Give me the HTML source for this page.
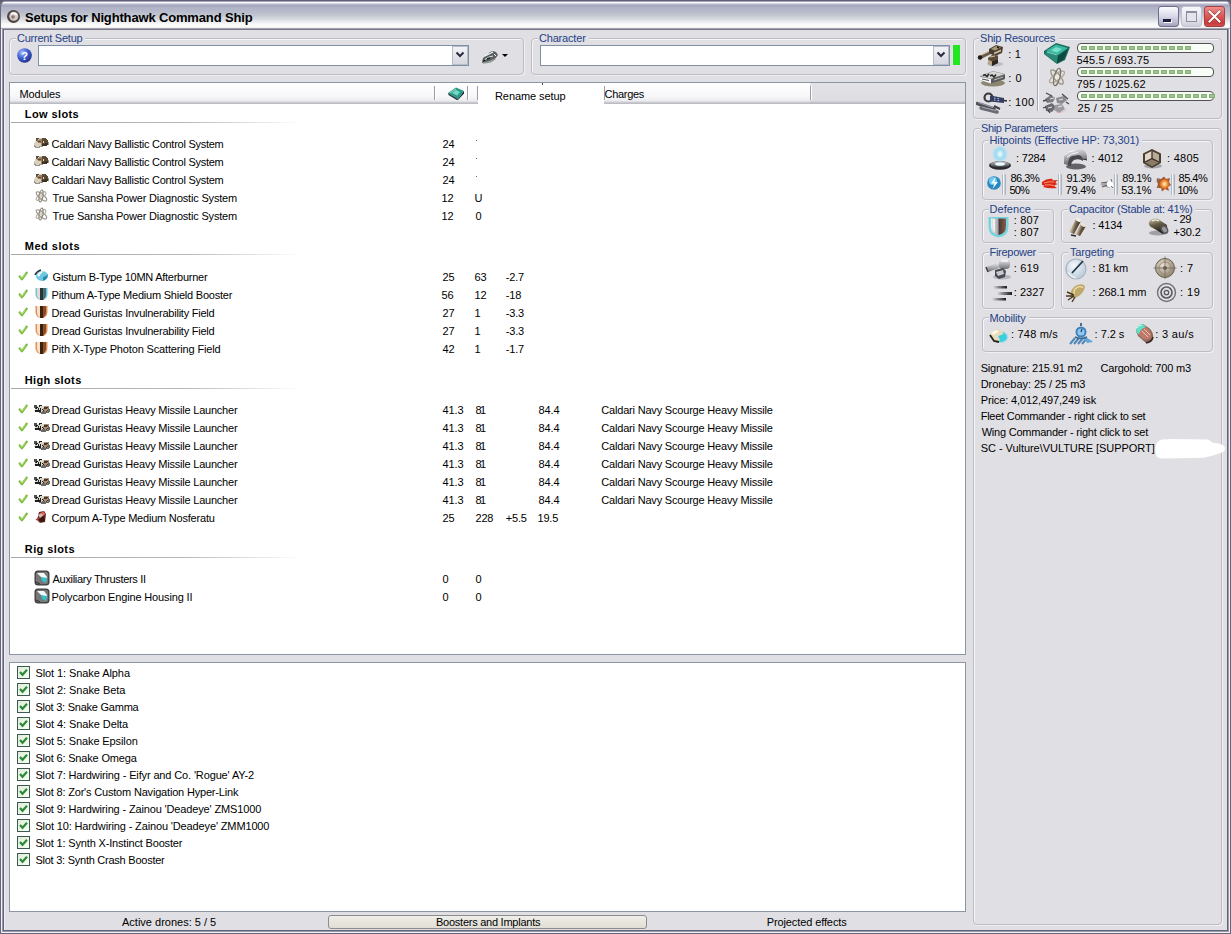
<!DOCTYPE html><html><head><meta charset="utf-8"><style>
html,body{margin:0;padding:0;}
body{width:1231px;height:934px;position:relative;overflow:hidden;background:#e0dfe3;font-family:"Liberation Sans",sans-serif;}
.t{position:absolute;white-space:pre;font-family:"Liberation Sans",sans-serif;font-size:11px;line-height:13px;color:#000;}
.gt{color:#1f3f86;letter-spacing:-0.2px;}
</style></head><body>
<div style="position:absolute;left:0px;top:0px;width:1231px;height:12px;background:#5e5e70;"></div>
<div style="position:absolute;left:0;top:0;width:1231px;height:30px;border-radius:7px 7px 0 0;background:linear-gradient(to bottom,#60607a 0px,#60607a 1px,#a4a4b4 1px,#a4a4b4 2px,#fafafc 2px,#fafafc 3px,#d4d4e2 3px,#d4d4e2 4px,#b8b8cc 4px,#b8b8cc 5px,#a6a6be 5px,#a6a6be 6px,#a8a8c0 6px,#a8a8c0 7px,#b0b2c6 7px,#b0b2c6 8px,#b2b4c8 8px,#b2b4c8 9px,#b3b6c9 9px,#b3b6c9 10px,#b5b8ca 10px,#b5b8ca 11px,#b7bbcb 11px,#b7bbcb 12px,#b9bdcb 12px,#b9bdcb 13px,#bcc1cc 13px,#bcc1cc 14px,#bfc4ce 14px,#bfc4ce 15px,#c3c7d1 15px,#c3c7d1 16px,#c8ccd4 16px,#c8ccd4 17px,#cdd1d8 17px,#cdd1d8 18px,#d3d6dc 18px,#d3d6dc 19px,#d9dbe0 19px,#d9dbe0 20px,#e2e4e8 20px,#e2e4e8 21px,#e8e9ec 21px,#e8e9ec 22px,#eeeff1 22px,#eeeff1 23px,#f5f5f7 23px,#f5f5f7 24px,#f9f9fa 24px,#f9f9fa 25px,#fbfbfc 25px,#fbfbfc 26px,#fafafb 26px,#fafafb 27px,#f0f0f3 27px,#f0f0f3 28px,#a4a4b0 28px,#a4a4b0 29px,#767684 29px,#767684 30px);box-shadow:inset 1px 0 0 #6a6a7a, inset -1px 0 0 #6a6a7a;"></div>
<div style="position:absolute;left:0px;top:29px;width:1px;height:905px;background:#66667a;"></div>
<div style="position:absolute;left:1px;top:29px;width:1px;height:904px;background:#f2f2f6;"></div>
<div style="position:absolute;left:2px;top:29px;width:1px;height:903px;background:#9a9aaa;"></div>
<div style="position:absolute;left:3px;top:29px;width:1px;height:902px;background:#62627a;"></div>
<div style="position:absolute;left:1230px;top:29px;width:1px;height:905px;background:#66667a;"></div>
<div style="position:absolute;left:1229px;top:29px;width:1px;height:904px;background:#f2f2f6;"></div>
<div style="position:absolute;left:1228px;top:29px;width:1px;height:903px;background:#9a9aaa;"></div>
<div style="position:absolute;left:1227px;top:29px;width:1px;height:902px;background:#62627a;"></div>
<div style="position:absolute;left:3px;top:930px;width:1225px;height:1px;background:#62627a;"></div>
<div style="position:absolute;left:2px;top:931px;width:1227px;height:1px;background:#9a9aaa;"></div>
<div style="position:absolute;left:1px;top:932px;width:1229px;height:1px;background:#f2f2f6;"></div>
<div style="position:absolute;left:0px;top:933px;width:1231px;height:1px;background:#66667a;"></div>
<div style="position:absolute;left:4px;top:30px;width:1px;height:900px;background:#f0f0f4;"></div>
<svg style="position:absolute;left:6px;top:9px" width="16" height="15" viewBox="0 0 16 15"><defs><filter id="b1" x="-20%" y="-20%" width="140%" height="140%"><feGaussianBlur stdDeviation="0.35"/></filter></defs><g filter="url(#b1)"><circle cx="7.5" cy="7.5" r="6.5" fill="#4e4440"/><circle cx="7.8" cy="7.2" r="4.5" fill="#d8ccc8"/><path d="M5 5 Q8 3 11 6" stroke="#ffffff" stroke-width="1.5" fill="none"/><circle cx="7" cy="8" r="1.8" fill="#8a7a74"/></g></svg>
<div class="t" style="left:25px;top:10px;font-size:13px;line-height:15px;font-weight:bold;color:#000;letter-spacing:-0.156px;">Setups for Nighthawk Command Ship</div>
<div style="position:absolute;left:1158px;top:6px;width:21px;height:21px;border:1px solid #6e6e88;border-radius:3px;box-sizing:border-box;background:linear-gradient(to bottom,#fbfbff,#dcdcea 45%,#b4b4cc 85%,#a0a0bc);"></div>
<div style="position:absolute;left:1163px;top:19px;width:8px;height:3px;background:#1c1c3c;box-shadow:1px 1px 0 #fff;"></div>
<div style="position:absolute;left:1181px;top:6px;width:21px;height:21px;border:1px solid #c4c4d0;border-radius:3px;box-sizing:border-box;background:linear-gradient(to bottom,#f6f6fa,#e4e4ec 60%,#cfcfdc);"></div>
<div style="position:absolute;left:1186px;top:11px;width:11px;height:11px;border:1px solid #8e8e9c;border-top-width:2px;box-sizing:border-box;background:#e4e4ec;"></div>
<div style="position:absolute;left:1204px;top:6px;width:21px;height:21px;border:1px solid #a84040;border-radius:3px;box-sizing:border-box;background:linear-gradient(to bottom,#f09090,#dc5a58 45%,#c83c3c 85%,#d05050);"></div>
<svg style="position:absolute;left:1207px;top:9px" width="15" height="15" viewBox="0 0 15 15"><path d="M2.5 2.5 L12.5 12.5 M12.5 2.5 L2.5 12.5" stroke="#5a1a1a" stroke-width="3.2" stroke-linecap="square" opacity="0.5"/><path d="M2.5 2.5 L12.5 12.5 M12.5 2.5 L2.5 12.5" stroke="#ffffff" stroke-width="2" stroke-linecap="square"/></svg>
<div style="position:absolute;left:9px;top:38px;width:515px;height:37px;border:1px solid #bdbcc5;border-radius:4px;box-sizing:border-box;box-shadow:inset 1px 1px 0 #f6f6f8, 1px 1px 0 #f0f0f4;"></div>
<div style="position:absolute;left:16px;top:33px;width:69.2px;height:11px;background:#e0dfe3;"></div>
<div class="t" style="left:17px;top:32px;font-size:11px;line-height:13px;color:#1f3f86;letter-spacing:-0.233px;">Current Setup</div>
<svg style="position:absolute;left:17px;top:48px" width="16" height="16" viewBox="0 0 16 16"><defs><radialGradient id="qg" cx="0.35" cy="0.3" r="0.8"><stop offset="0" stop-color="#a8c0ff"/><stop offset="0.5" stop-color="#3c5cd0"/><stop offset="1" stop-color="#1c2c80"/></radialGradient></defs><circle cx="7.5" cy="7.5" r="7.3" fill="url(#qg)"/><text x="7.5" y="12" font-family="Liberation Sans" font-weight="bold" font-size="11" fill="#fff" text-anchor="middle">?</text></svg>
<div style="position:absolute;left:38px;top:45px;width:431px;height:21px;border:1px solid #7f8fa6;box-sizing:border-box;background:#fff;"></div>
<div style="position:absolute;left:452px;top:46px;width:16px;height:19px;border:1px solid #b8bcc8;box-sizing:border-box;background:linear-gradient(to bottom,#f2f2f6,#d6d6e0);"></div>
<svg style="position:absolute;left:455px;top:51px" width="10" height="8" viewBox="0 0 10 8"><path d="M1.5 1.5 L5 5 L8.5 1.5" stroke="#2a2a40" stroke-width="2" fill="none"/></svg>
<svg style="position:absolute;left:481px;top:49px" width="18" height="16" viewBox="0 0 18 16"><defs><filter id="b2" x="-20%" y="-20%" width="140%" height="140%"><feGaussianBlur stdDeviation="0.4"/></filter></defs><g filter="url(#b2)"><path d="M1 14 L2 9 L6 6 L9 3 L12 2 L15 3 L17 6 L14 10 L9 12 L4 14 Z" fill="#5a6060"/><path d="M4 7 L8 5 L12 3" stroke="#f0f4f4" stroke-width="1.3" fill="none"/><path d="M3 11 L8 8 L12 7" stroke="#e0e4e4" stroke-width="1" fill="none"/><path d="M2 12 L4 11 M6 10 L9 9" stroke="#1a2020" stroke-width="1.5"/><path d="M13 5 L15 7" stroke="#ffffff" stroke-width="1"/><path d="M2 14 L9 13 L14 10" stroke="#909898" stroke-width="1.5" fill="none"/></g></svg>
<svg style="position:absolute;left:502px;top:54px" width="6" height="4" viewBox="0 0 6 4"><path d="M0 0 L6 0 L3 3 Z" fill="#000"/></svg>
<div style="position:absolute;left:531px;top:38px;width:435px;height:37px;border:1px solid #bdbcc5;border-radius:4px;box-sizing:border-box;box-shadow:inset 1px 1px 0 #f6f6f8, 1px 1px 0 #f0f0f4;"></div>
<div style="position:absolute;left:538px;top:33px;width:50.5px;height:11px;background:#e0dfe3;"></div>
<div class="t" style="left:539px;top:32px;font-size:11px;line-height:13px;color:#1f3f86;letter-spacing:-0.188px;">Character</div>
<div style="position:absolute;left:540px;top:45px;width:410px;height:21px;border:1px solid #7f8fa6;box-sizing:border-box;background:#fff;"></div>
<div style="position:absolute;left:933px;top:46px;width:16px;height:19px;border:1px solid #b8bcc8;box-sizing:border-box;background:linear-gradient(to bottom,#f2f2f6,#d6d6e0);"></div>
<svg style="position:absolute;left:936px;top:51px" width="10" height="8" viewBox="0 0 10 8"><path d="M1.5 1.5 L5 5 L8.5 1.5" stroke="#2a2a40" stroke-width="2" fill="none"/></svg>
<div style="position:absolute;left:953px;top:45px;width:7px;height:20px;background:#22e622;"></div>
<div style="position:absolute;left:9px;top:82px;width:957px;height:573px;border:1px solid #8a96a4;box-sizing:border-box;background:#fff;"></div>
<div style="position:absolute;left:10px;top:83px;width:955px;height:21px;background:linear-gradient(to bottom,#ffffff,#f8f8fa 60%,#ececf0 85%,#d4d4da 90%,#b4b4bc);"></div>
<div style="position:absolute;left:810px;top:83px;width:155px;height:21px;background:linear-gradient(to bottom,#e2e1e5,#dedde2 85%,#cacad0 90%,#b4b4bc);"></div>
<div style="position:absolute;left:434px;top:86px;width:1px;height:14px;background:#9c9ca4;"></div>
<div style="position:absolute;left:435px;top:86px;width:1px;height:14px;background:#ffffff;"></div>
<div style="position:absolute;left:467px;top:86px;width:1px;height:14px;background:#9c9ca4;"></div>
<div style="position:absolute;left:468px;top:86px;width:1px;height:14px;background:#ffffff;"></div>
<div style="position:absolute;left:477px;top:86px;width:1px;height:14px;background:#9c9ca4;"></div>
<div style="position:absolute;left:478px;top:86px;width:1px;height:14px;background:#ffffff;"></div>
<div style="position:absolute;left:604px;top:86px;width:1px;height:14px;background:#9c9ca4;"></div>
<div style="position:absolute;left:605px;top:86px;width:1px;height:14px;background:#ffffff;"></div>
<div style="position:absolute;left:810px;top:86px;width:1px;height:14px;background:#9c9ca4;"></div>
<div style="position:absolute;left:811px;top:86px;width:1px;height:14px;background:#ffffff;"></div>
<div class="t" style="left:19.5px;top:88px;font-size:11px;line-height:13px;color:#000;letter-spacing:-0.083px;">Modules</div>
<svg style="position:absolute;left:447px;top:86px" width="18" height="14" viewBox="0 0 18 14"><defs><filter id="b3" x="-20%" y="-20%" width="140%" height="140%"><feGaussianBlur stdDeviation="0.35"/></filter></defs><g filter="url(#b3)"><path d="M1 7 L9 1.5 L17 5 L11 13 Z" fill="#2a9a86"/><path d="M5 7 L9 4 L13 6 L10 9.5 Z" fill="#70d8c4"/><path d="M1 7 L11 13 L10.5 14.5 L1.5 9 Z" fill="#1e3a40"/><path d="M11 13 L17 5 L17 7.5 L10.5 14.5 Z" fill="#142a30"/><path d="M3 7 L9 3" stroke="#a0f0e0" stroke-width="0.8"/></g></svg>
<div style="position:absolute;left:478px;top:83px;width:126px;height:22px;background:#fff;"></div>
<div style="position:absolute;left:542px;top:83px;width:1px;height:2px;background:#444;"></div>
<div class="t" style="left:495px;top:90px;font-size:11px;line-height:13px;color:#000;letter-spacing:-0.091px;">Rename setup</div>
<div class="t" style="left:604.5px;top:88px;font-size:11px;line-height:13px;color:#000;letter-spacing:-0.300px;">Charges</div>
<div class="t" style="left:24.8px;top:108px;font-size:11px;line-height:13px;font-weight:bold;color:#000;letter-spacing:0.400px;">Low slots</div>
<div style="position:absolute;left:11px;top:122px;width:290px;height:1px;background:linear-gradient(to right,#a8a8ac,#b8b8bc 60%,rgba(255,255,255,0));"></div>
<svg style="position:absolute;left:34px;top:137px" width="17" height="16" viewBox="0 0 17 16"><defs><filter id="b4" x="-20%" y="-20%" width="140%" height="140%"><feGaussianBlur stdDeviation="0.4"/></filter></defs><g filter="url(#b4)"><rect x="2" y="1" width="3" height="1" fill="#5a5040"/><rect x="5" y="1" width="3" height="1" fill="#d8d0bc"/><rect x="8" y="1" width="4" height="1" fill="#5a5040"/><rect x="2" y="2" width="2" height="1" fill="#5a5040"/><rect x="4" y="2" width="1" height="1" fill="#d8d0bc"/><rect x="5" y="2" width="3" height="1" fill="#9a8060"/><rect x="8" y="2" width="5" height="1" fill="#5a4834"/><rect x="2" y="3" width="1" height="1" fill="#5a5040"/><rect x="3" y="3" width="5" height="1" fill="#9a8060"/><rect x="8" y="3" width="6" height="1" fill="#5a4834"/><rect x="1" y="4" width="2" height="1" fill="#d8d0bc"/><rect x="3" y="4" width="1" height="1" fill="#9a8060"/><rect x="4" y="4" width="3" height="1" fill="#5a4834"/><rect x="7" y="4" width="1" height="1" fill="#9a8060"/><rect x="8" y="4" width="1" height="1" fill="#5a4834"/><rect x="9" y="4" width="1" height="1" fill="#d8d0bc"/><rect x="10" y="4" width="4" height="1" fill="#5a4834"/><rect x="1" y="5" width="3" height="1" fill="#d8d0bc"/><rect x="4" y="5" width="4" height="1" fill="#9a8060"/><rect x="8" y="5" width="1" height="1" fill="#5a4834"/><rect x="9" y="5" width="1" height="1" fill="#d8d0bc"/><rect x="10" y="5" width="4" height="1" fill="#5a4834"/><rect x="14" y="5" width="1" height="1" fill="#9a968e"/><rect x="0" y="6" width="7" height="1" fill="#d8d0bc"/><rect x="7" y="6" width="1" height="1" fill="#9a8060"/><rect x="8" y="6" width="3" height="1" fill="#5a4834"/><rect x="11" y="6" width="3" height="1" fill="#3e3024"/><rect x="14" y="6" width="1" height="1" fill="#9a968e"/><rect x="0" y="7" width="7" height="1" fill="#d8d0bc"/><rect x="7" y="7" width="1" height="1" fill="#9a8060"/><rect x="8" y="7" width="6" height="1" fill="#3e3024"/><rect x="14" y="7" width="1" height="1" fill="#9a968e"/><rect x="0" y="8" width="1" height="1" fill="#9a968e"/><rect x="1" y="8" width="6" height="1" fill="#d8d0bc"/><rect x="7" y="8" width="1" height="1" fill="#9a968e"/><rect x="8" y="8" width="5" height="1" fill="#3e3024"/><rect x="0" y="9" width="2" height="1" fill="#9a968e"/><rect x="2" y="9" width="3" height="1" fill="#d8d0bc"/><rect x="5" y="9" width="4" height="1" fill="#9a968e"/><rect x="1" y="10" width="5" height="1" fill="#9a968e"/></g></svg>
<div class="t" style="left:51.6px;top:138px;font-size:11px;line-height:13px;color:#000;letter-spacing:-0.261px;">Caldari Navy Ballistic Control System</div>
<div class="t" style="left:442.5px;top:138px;font-size:11px;line-height:13px;color:#000;letter-spacing:-0.220px;">24</div>
<svg style="position:absolute;left:34px;top:155px" width="17" height="16" viewBox="0 0 17 16"><defs><filter id="b5" x="-20%" y="-20%" width="140%" height="140%"><feGaussianBlur stdDeviation="0.4"/></filter></defs><g filter="url(#b5)"><rect x="2" y="1" width="3" height="1" fill="#5a5040"/><rect x="5" y="1" width="3" height="1" fill="#d8d0bc"/><rect x="8" y="1" width="4" height="1" fill="#5a5040"/><rect x="2" y="2" width="2" height="1" fill="#5a5040"/><rect x="4" y="2" width="1" height="1" fill="#d8d0bc"/><rect x="5" y="2" width="3" height="1" fill="#9a8060"/><rect x="8" y="2" width="5" height="1" fill="#5a4834"/><rect x="2" y="3" width="1" height="1" fill="#5a5040"/><rect x="3" y="3" width="5" height="1" fill="#9a8060"/><rect x="8" y="3" width="6" height="1" fill="#5a4834"/><rect x="1" y="4" width="2" height="1" fill="#d8d0bc"/><rect x="3" y="4" width="1" height="1" fill="#9a8060"/><rect x="4" y="4" width="3" height="1" fill="#5a4834"/><rect x="7" y="4" width="1" height="1" fill="#9a8060"/><rect x="8" y="4" width="1" height="1" fill="#5a4834"/><rect x="9" y="4" width="1" height="1" fill="#d8d0bc"/><rect x="10" y="4" width="4" height="1" fill="#5a4834"/><rect x="1" y="5" width="3" height="1" fill="#d8d0bc"/><rect x="4" y="5" width="4" height="1" fill="#9a8060"/><rect x="8" y="5" width="1" height="1" fill="#5a4834"/><rect x="9" y="5" width="1" height="1" fill="#d8d0bc"/><rect x="10" y="5" width="4" height="1" fill="#5a4834"/><rect x="14" y="5" width="1" height="1" fill="#9a968e"/><rect x="0" y="6" width="7" height="1" fill="#d8d0bc"/><rect x="7" y="6" width="1" height="1" fill="#9a8060"/><rect x="8" y="6" width="3" height="1" fill="#5a4834"/><rect x="11" y="6" width="3" height="1" fill="#3e3024"/><rect x="14" y="6" width="1" height="1" fill="#9a968e"/><rect x="0" y="7" width="7" height="1" fill="#d8d0bc"/><rect x="7" y="7" width="1" height="1" fill="#9a8060"/><rect x="8" y="7" width="6" height="1" fill="#3e3024"/><rect x="14" y="7" width="1" height="1" fill="#9a968e"/><rect x="0" y="8" width="1" height="1" fill="#9a968e"/><rect x="1" y="8" width="6" height="1" fill="#d8d0bc"/><rect x="7" y="8" width="1" height="1" fill="#9a968e"/><rect x="8" y="8" width="5" height="1" fill="#3e3024"/><rect x="0" y="9" width="2" height="1" fill="#9a968e"/><rect x="2" y="9" width="3" height="1" fill="#d8d0bc"/><rect x="5" y="9" width="4" height="1" fill="#9a968e"/><rect x="1" y="10" width="5" height="1" fill="#9a968e"/></g></svg>
<div class="t" style="left:51.6px;top:156px;font-size:11px;line-height:13px;color:#000;letter-spacing:-0.261px;">Caldari Navy Ballistic Control System</div>
<div class="t" style="left:442.5px;top:156px;font-size:11px;line-height:13px;color:#000;letter-spacing:-0.220px;">24</div>
<svg style="position:absolute;left:34px;top:173px" width="17" height="16" viewBox="0 0 17 16"><defs><filter id="b6" x="-20%" y="-20%" width="140%" height="140%"><feGaussianBlur stdDeviation="0.4"/></filter></defs><g filter="url(#b6)"><rect x="2" y="1" width="3" height="1" fill="#5a5040"/><rect x="5" y="1" width="3" height="1" fill="#d8d0bc"/><rect x="8" y="1" width="4" height="1" fill="#5a5040"/><rect x="2" y="2" width="2" height="1" fill="#5a5040"/><rect x="4" y="2" width="1" height="1" fill="#d8d0bc"/><rect x="5" y="2" width="3" height="1" fill="#9a8060"/><rect x="8" y="2" width="5" height="1" fill="#5a4834"/><rect x="2" y="3" width="1" height="1" fill="#5a5040"/><rect x="3" y="3" width="5" height="1" fill="#9a8060"/><rect x="8" y="3" width="6" height="1" fill="#5a4834"/><rect x="1" y="4" width="2" height="1" fill="#d8d0bc"/><rect x="3" y="4" width="1" height="1" fill="#9a8060"/><rect x="4" y="4" width="3" height="1" fill="#5a4834"/><rect x="7" y="4" width="1" height="1" fill="#9a8060"/><rect x="8" y="4" width="1" height="1" fill="#5a4834"/><rect x="9" y="4" width="1" height="1" fill="#d8d0bc"/><rect x="10" y="4" width="4" height="1" fill="#5a4834"/><rect x="1" y="5" width="3" height="1" fill="#d8d0bc"/><rect x="4" y="5" width="4" height="1" fill="#9a8060"/><rect x="8" y="5" width="1" height="1" fill="#5a4834"/><rect x="9" y="5" width="1" height="1" fill="#d8d0bc"/><rect x="10" y="5" width="4" height="1" fill="#5a4834"/><rect x="14" y="5" width="1" height="1" fill="#9a968e"/><rect x="0" y="6" width="7" height="1" fill="#d8d0bc"/><rect x="7" y="6" width="1" height="1" fill="#9a8060"/><rect x="8" y="6" width="3" height="1" fill="#5a4834"/><rect x="11" y="6" width="3" height="1" fill="#3e3024"/><rect x="14" y="6" width="1" height="1" fill="#9a968e"/><rect x="0" y="7" width="7" height="1" fill="#d8d0bc"/><rect x="7" y="7" width="1" height="1" fill="#9a8060"/><rect x="8" y="7" width="6" height="1" fill="#3e3024"/><rect x="14" y="7" width="1" height="1" fill="#9a968e"/><rect x="0" y="8" width="1" height="1" fill="#9a968e"/><rect x="1" y="8" width="6" height="1" fill="#d8d0bc"/><rect x="7" y="8" width="1" height="1" fill="#9a968e"/><rect x="8" y="8" width="5" height="1" fill="#3e3024"/><rect x="0" y="9" width="2" height="1" fill="#9a968e"/><rect x="2" y="9" width="3" height="1" fill="#d8d0bc"/><rect x="5" y="9" width="4" height="1" fill="#9a968e"/><rect x="1" y="10" width="5" height="1" fill="#9a968e"/></g></svg>
<div class="t" style="left:51.6px;top:174px;font-size:11px;line-height:13px;color:#000;letter-spacing:-0.261px;">Caldari Navy Ballistic Control System</div>
<div class="t" style="left:442.5px;top:174px;font-size:11px;line-height:13px;color:#000;letter-spacing:-0.220px;">24</div>
<svg style="position:absolute;left:34px;top:188px" width="17" height="16" viewBox="0 0 17 16"><defs><filter id="b7" x="-20%" y="-20%" width="140%" height="140%"><feGaussianBlur stdDeviation="0.3"/></filter></defs><g filter="url(#b7)"><ellipse cx="7.5" cy="8" rx="6.5" ry="2.3" fill="none" stroke="#9a968c" stroke-width="1.2" transform="rotate(40 7 8)"/><ellipse cx="7" cy="8" rx="6" ry="2.3" fill="none" stroke="#b4b0a4" stroke-width="1.2" transform="rotate(-40 7 8)"/><ellipse cx="7" cy="8" rx="1.8" ry="6" fill="none" stroke="#8a8678" stroke-width="1.1" transform="rotate(10 7 8)"/><circle cx="7" cy="8" r="1.5" fill="#d8d4c8"/></g></svg>
<div class="t" style="left:52.6px;top:192px;font-size:11px;line-height:13px;color:#000;letter-spacing:-0.188px;">True Sansha Power Diagnostic System</div>
<div class="t" style="left:441.5px;top:192px;font-size:11px;line-height:13px;color:#000;letter-spacing:-0.220px;">12</div>
<div class="t" style="left:474.5px;top:192px;font-size:11px;line-height:13px;color:#000;letter-spacing:-0.220px;">U</div>
<svg style="position:absolute;left:34px;top:206px" width="17" height="16" viewBox="0 0 17 16"><defs><filter id="b8" x="-20%" y="-20%" width="140%" height="140%"><feGaussianBlur stdDeviation="0.3"/></filter></defs><g filter="url(#b8)"><ellipse cx="7.5" cy="8" rx="6.5" ry="2.3" fill="none" stroke="#9a968c" stroke-width="1.2" transform="rotate(40 7 8)"/><ellipse cx="7" cy="8" rx="6" ry="2.3" fill="none" stroke="#b4b0a4" stroke-width="1.2" transform="rotate(-40 7 8)"/><ellipse cx="7" cy="8" rx="1.8" ry="6" fill="none" stroke="#8a8678" stroke-width="1.1" transform="rotate(10 7 8)"/><circle cx="7" cy="8" r="1.5" fill="#d8d4c8"/></g></svg>
<div class="t" style="left:52.6px;top:210px;font-size:11px;line-height:13px;color:#000;letter-spacing:-0.188px;">True Sansha Power Diagnostic System</div>
<div class="t" style="left:441.5px;top:210px;font-size:11px;line-height:13px;color:#000;letter-spacing:-0.220px;">12</div>
<div class="t" style="left:475.5px;top:210px;font-size:11px;line-height:13px;color:#000;letter-spacing:-0.220px;">0</div>
<div class="t" style="left:24.8px;top:240px;font-size:11px;line-height:13px;font-weight:bold;color:#000;letter-spacing:0.500px;">Med slots</div>
<div style="position:absolute;left:11px;top:254px;width:290px;height:1px;background:linear-gradient(to right,#a8a8ac,#b8b8bc 60%,rgba(255,255,255,0));"></div>
<svg style="position:absolute;left:18px;top:271px" width="10" height="10" viewBox="0 0 10 10"><defs><filter id="b9" x="-20%" y="-20%" width="140%" height="140%"><feGaussianBlur stdDeviation="0.3"/></filter></defs><g filter="url(#b9)"><path d="M1.8 5.5 L4 8.2 L8.6 1.8" stroke="#78b838" stroke-width="2.3" fill="none" stroke-linejoin="round" stroke-linecap="round"/><path d="M2.2 5.2 L4 7.4 L7.8 2.4" stroke="#c0ec80" stroke-width="0.8" fill="none"/></g></svg>
<svg style="position:absolute;left:34px;top:269px" width="17" height="16" viewBox="0 0 17 16"><defs><filter id="b10" x="-20%" y="-20%" width="140%" height="140%"><feGaussianBlur stdDeviation="0.3"/></filter></defs><g filter="url(#b10)"><ellipse cx="8" cy="7" rx="6" ry="5" fill="#6ec8e0"/><path d="M3 6 Q5 2 10 2 Q7 4 5 8 Z" fill="#f0f8fc"/><path d="M9 8 Q12 8 14 5 Q14 10 9 12 Z" fill="#2a88b0"/><path d="M1 6 Q3 2 7 1" stroke="#2a3038" stroke-width="1.6" fill="none"/></g></svg>
<div class="t" style="left:52.6px;top:271px;font-size:11px;line-height:13px;color:#000;letter-spacing:-0.262px;">Gistum B-Type 10MN Afterburner</div>
<div class="t" style="left:442.5px;top:271px;font-size:11px;line-height:13px;color:#000;letter-spacing:-0.220px;">25</div>
<div class="t" style="left:474.5px;top:271px;font-size:11px;line-height:13px;color:#000;letter-spacing:-0.220px;">63</div>
<div class="t" style="left:505.8px;top:271px;font-size:11px;line-height:13px;color:#000;letter-spacing:-0.220px;">-2.7</div>
<svg style="position:absolute;left:18px;top:289px" width="10" height="10" viewBox="0 0 10 10"><defs><filter id="b11" x="-20%" y="-20%" width="140%" height="140%"><feGaussianBlur stdDeviation="0.3"/></filter></defs><g filter="url(#b11)"><path d="M1.8 5.5 L4 8.2 L8.6 1.8" stroke="#78b838" stroke-width="2.3" fill="none" stroke-linejoin="round" stroke-linecap="round"/><path d="M2.2 5.2 L4 7.4 L7.8 2.4" stroke="#c0ec80" stroke-width="0.8" fill="none"/></g></svg>
<svg style="position:absolute;left:34px;top:287px" width="17" height="16" viewBox="0 0 17 16"><defs><filter id="b12" x="-20%" y="-20%" width="140%" height="140%"><feGaussianBlur stdDeviation="0.35"/></filter></defs><g filter="url(#b12)"><path d="M1.5 1 L13.5 1 L13.5 7 Q13.5 12.5 7.5 13 Q1.5 12.5 1.5 7 Z" fill="#6cc8d8"/><path d="M3 1 L6 1 L6 12.5 Q3 11 3 7 Z" fill="#e8d8d0"/><rect x="6" y="1" width="3.5" height="12" fill="#2a3438"/><path d="M9.5 1 L12 1 L12 7 Q12 11 9.5 12 Z" fill="#4a6a70"/></g></svg>
<div class="t" style="left:51.6px;top:289px;font-size:11px;line-height:13px;color:#000;letter-spacing:-0.221px;">Pithum A-Type Medium Shield Booster</div>
<div class="t" style="left:441.5px;top:289px;font-size:11px;line-height:13px;color:#000;letter-spacing:-0.220px;">56</div>
<div class="t" style="left:474.5px;top:289px;font-size:11px;line-height:13px;color:#000;letter-spacing:-0.220px;">12</div>
<div class="t" style="left:505.8px;top:289px;font-size:11px;line-height:13px;color:#000;letter-spacing:-0.220px;">-18</div>
<svg style="position:absolute;left:18px;top:307px" width="10" height="10" viewBox="0 0 10 10"><defs><filter id="b13" x="-20%" y="-20%" width="140%" height="140%"><feGaussianBlur stdDeviation="0.3"/></filter></defs><g filter="url(#b13)"><path d="M1.8 5.5 L4 8.2 L8.6 1.8" stroke="#78b838" stroke-width="2.3" fill="none" stroke-linejoin="round" stroke-linecap="round"/><path d="M2.2 5.2 L4 7.4 L7.8 2.4" stroke="#c0ec80" stroke-width="0.8" fill="none"/></g></svg>
<svg style="position:absolute;left:34px;top:305px" width="17" height="16" viewBox="0 0 17 16"><defs><filter id="b14" x="-20%" y="-20%" width="140%" height="140%"><feGaussianBlur stdDeviation="0.35"/></filter></defs><g filter="url(#b14)"><path d="M1.5 1 L13.5 1 L13.5 7 Q13.5 12.5 7.5 13 Q1.5 12.5 1.5 7 Z" fill="#e09058"/><path d="M3 1 L6 1 L6 12.5 Q3 11 3 7 Z" fill="#f8e0c8"/><rect x="6" y="1" width="3.5" height="12" fill="#3a2010"/><path d="M9.5 1 L12 1 L12 7 Q12 11 9.5 12 Z" fill="#8a4a20"/></g></svg>
<div class="t" style="left:51.6px;top:307px;font-size:11px;line-height:13px;color:#000;letter-spacing:-0.231px;">Dread Guristas Invulnerability Field</div>
<div class="t" style="left:442.5px;top:307px;font-size:11px;line-height:13px;color:#000;letter-spacing:-0.220px;">27</div>
<div class="t" style="left:474.5px;top:307px;font-size:11px;line-height:13px;color:#000;letter-spacing:-0.220px;">1</div>
<div class="t" style="left:505.8px;top:307px;font-size:11px;line-height:13px;color:#000;letter-spacing:-0.220px;">-3.3</div>
<svg style="position:absolute;left:18px;top:325px" width="10" height="10" viewBox="0 0 10 10"><defs><filter id="b15" x="-20%" y="-20%" width="140%" height="140%"><feGaussianBlur stdDeviation="0.3"/></filter></defs><g filter="url(#b15)"><path d="M1.8 5.5 L4 8.2 L8.6 1.8" stroke="#78b838" stroke-width="2.3" fill="none" stroke-linejoin="round" stroke-linecap="round"/><path d="M2.2 5.2 L4 7.4 L7.8 2.4" stroke="#c0ec80" stroke-width="0.8" fill="none"/></g></svg>
<svg style="position:absolute;left:34px;top:323px" width="17" height="16" viewBox="0 0 17 16"><defs><filter id="b16" x="-20%" y="-20%" width="140%" height="140%"><feGaussianBlur stdDeviation="0.35"/></filter></defs><g filter="url(#b16)"><path d="M1.5 1 L13.5 1 L13.5 7 Q13.5 12.5 7.5 13 Q1.5 12.5 1.5 7 Z" fill="#e09058"/><path d="M3 1 L6 1 L6 12.5 Q3 11 3 7 Z" fill="#f8e0c8"/><rect x="6" y="1" width="3.5" height="12" fill="#3a2010"/><path d="M9.5 1 L12 1 L12 7 Q12 11 9.5 12 Z" fill="#8a4a20"/></g></svg>
<div class="t" style="left:51.6px;top:325px;font-size:11px;line-height:13px;color:#000;letter-spacing:-0.231px;">Dread Guristas Invulnerability Field</div>
<div class="t" style="left:442.5px;top:325px;font-size:11px;line-height:13px;color:#000;letter-spacing:-0.220px;">27</div>
<div class="t" style="left:474.5px;top:325px;font-size:11px;line-height:13px;color:#000;letter-spacing:-0.220px;">1</div>
<div class="t" style="left:505.8px;top:325px;font-size:11px;line-height:13px;color:#000;letter-spacing:-0.220px;">-3.3</div>
<svg style="position:absolute;left:18px;top:343px" width="10" height="10" viewBox="0 0 10 10"><defs><filter id="b17" x="-20%" y="-20%" width="140%" height="140%"><feGaussianBlur stdDeviation="0.3"/></filter></defs><g filter="url(#b17)"><path d="M1.8 5.5 L4 8.2 L8.6 1.8" stroke="#78b838" stroke-width="2.3" fill="none" stroke-linejoin="round" stroke-linecap="round"/><path d="M2.2 5.2 L4 7.4 L7.8 2.4" stroke="#c0ec80" stroke-width="0.8" fill="none"/></g></svg>
<svg style="position:absolute;left:34px;top:341px" width="17" height="16" viewBox="0 0 17 16"><defs><filter id="b18" x="-20%" y="-20%" width="140%" height="140%"><feGaussianBlur stdDeviation="0.35"/></filter></defs><g filter="url(#b18)"><path d="M1.5 1 L13.5 1 L13.5 7 Q13.5 12.5 7.5 13 Q1.5 12.5 1.5 7 Z" fill="#e09058"/><path d="M3 1 L6 1 L6 12.5 Q3 11 3 7 Z" fill="#f8e0c8"/><rect x="6" y="1" width="3.5" height="12" fill="#3a2010"/><path d="M9.5 1 L12 1 L12 7 Q12 11 9.5 12 Z" fill="#8a4a20"/></g></svg>
<div class="t" style="left:51.6px;top:343px;font-size:11px;line-height:13px;color:#000;letter-spacing:-0.153px;">Pith X-Type Photon Scattering Field</div>
<div class="t" style="left:442.5px;top:343px;font-size:11px;line-height:13px;color:#000;letter-spacing:-0.220px;">42</div>
<div class="t" style="left:474.5px;top:343px;font-size:11px;line-height:13px;color:#000;letter-spacing:-0.220px;">1</div>
<div class="t" style="left:505.8px;top:343px;font-size:11px;line-height:13px;color:#000;letter-spacing:-0.220px;">-1.7</div>
<div class="t" style="left:24.8px;top:374px;font-size:11px;line-height:13px;font-weight:bold;color:#000;letter-spacing:0.367px;">High slots</div>
<div style="position:absolute;left:11px;top:388px;width:290px;height:1px;background:linear-gradient(to right,#a8a8ac,#b8b8bc 60%,rgba(255,255,255,0));"></div>
<svg style="position:absolute;left:18px;top:404px" width="10" height="10" viewBox="0 0 10 10"><defs><filter id="b19" x="-20%" y="-20%" width="140%" height="140%"><feGaussianBlur stdDeviation="0.3"/></filter></defs><g filter="url(#b19)"><path d="M1.8 5.5 L4 8.2 L8.6 1.8" stroke="#78b838" stroke-width="2.3" fill="none" stroke-linejoin="round" stroke-linecap="round"/><path d="M2.2 5.2 L4 7.4 L7.8 2.4" stroke="#c0ec80" stroke-width="0.8" fill="none"/></g></svg>
<svg style="position:absolute;left:34px;top:404px" width="17" height="16" viewBox="0 0 17 16"><defs><filter id="b20" x="-20%" y="-20%" width="140%" height="140%"><feGaussianBlur stdDeviation="0.4"/></filter></defs><g filter="url(#b20)"><rect x="0" y="1" width="3" height="1" fill="#505052"/><rect x="5" y="1" width="3" height="1" fill="#1c1c1c"/><rect x="0" y="2" width="3" height="1" fill="#505052"/><rect x="3" y="2" width="2" height="1" fill="#d8d8cc"/><rect x="5" y="2" width="1" height="1" fill="#1c1c1c"/><rect x="6" y="2" width="4" height="1" fill="#d8d8cc"/><rect x="10" y="2" width="5" height="1" fill="#a8907a"/><rect x="0" y="3" width="2" height="1" fill="#505052"/><rect x="2" y="3" width="2" height="1" fill="#1c1c1c"/><rect x="4" y="3" width="6" height="1" fill="#d8d8cc"/><rect x="10" y="3" width="4" height="1" fill="#4a3428"/><rect x="14" y="3" width="1" height="1" fill="#a8907a"/><rect x="1" y="4" width="1" height="1" fill="#505052"/><rect x="2" y="4" width="1" height="1" fill="#1c1c1c"/><rect x="3" y="4" width="1" height="1" fill="#d8d8cc"/><rect x="4" y="4" width="1" height="1" fill="#1c1c1c"/><rect x="5" y="4" width="1" height="1" fill="#d8d8cc"/><rect x="6" y="4" width="1" height="1" fill="#1c1c1c"/><rect x="7" y="4" width="2" height="1" fill="#d8d8cc"/><rect x="9" y="4" width="1" height="1" fill="#a8907a"/><rect x="10" y="4" width="3" height="1" fill="#4a3428"/><rect x="13" y="4" width="1" height="1" fill="#a8907a"/><rect x="14" y="4" width="1" height="1" fill="#6a6a68"/><rect x="1" y="5" width="3" height="1" fill="#d8d8cc"/><rect x="4" y="5" width="1" height="1" fill="#1c1c1c"/><rect x="5" y="5" width="1" height="1" fill="#d8d8cc"/><rect x="6" y="5" width="1" height="1" fill="#1c1c1c"/><rect x="7" y="5" width="1" height="1" fill="#d8d8cc"/><rect x="8" y="5" width="1" height="1" fill="#1c1c1c"/><rect x="9" y="5" width="5" height="1" fill="#a8907a"/><rect x="14" y="5" width="2" height="1" fill="#6a6a68"/><rect x="0" y="6" width="1" height="1" fill="#d8d8cc"/><rect x="1" y="6" width="6" height="1" fill="#1c1c1c"/><rect x="7" y="6" width="2" height="1" fill="#d8d8cc"/><rect x="9" y="6" width="1" height="1" fill="#1c1c1c"/><rect x="10" y="6" width="3" height="1" fill="#a8907a"/><rect x="13" y="6" width="1" height="1" fill="#4a3428"/><rect x="14" y="6" width="2" height="1" fill="#6a6a68"/><rect x="1" y="7" width="6" height="1" fill="#1c1c1c"/><rect x="7" y="7" width="1" height="1" fill="#d8d8cc"/><rect x="8" y="7" width="3" height="1" fill="#6a6a68"/><rect x="11" y="7" width="1" height="1" fill="#a8907a"/><rect x="12" y="7" width="1" height="1" fill="#4a3428"/><rect x="13" y="7" width="1" height="1" fill="#a8907a"/><rect x="14" y="7" width="2" height="1" fill="#6a6a68"/><rect x="5" y="8" width="10" height="1" fill="#6a6a68"/><rect x="7" y="9" width="5" height="1" fill="#6a6a68"/></g></svg>
<div class="t" style="left:51.6px;top:404px;font-size:11px;line-height:13px;color:#000;letter-spacing:-0.217px;">Dread Guristas Heavy Missile Launcher</div>
<div class="t" style="left:442.5px;top:404px;font-size:11px;line-height:13px;color:#000;letter-spacing:-0.133px;">41.3</div>
<div class="t" style="left:475.5px;top:404px;font-size:11px;line-height:13px;color:#000;letter-spacing:-1.500px;">81</div>
<div class="t" style="left:538.5px;top:404px;font-size:11px;line-height:13px;color:#000;letter-spacing:-0.100px;">84.4</div>
<div class="t" style="left:601.3px;top:404px;font-size:11px;line-height:13px;color:#000;letter-spacing:-0.191px;">Caldari Navy Scourge Heavy Missile</div>
<svg style="position:absolute;left:18px;top:422px" width="10" height="10" viewBox="0 0 10 10"><defs><filter id="b21" x="-20%" y="-20%" width="140%" height="140%"><feGaussianBlur stdDeviation="0.3"/></filter></defs><g filter="url(#b21)"><path d="M1.8 5.5 L4 8.2 L8.6 1.8" stroke="#78b838" stroke-width="2.3" fill="none" stroke-linejoin="round" stroke-linecap="round"/><path d="M2.2 5.2 L4 7.4 L7.8 2.4" stroke="#c0ec80" stroke-width="0.8" fill="none"/></g></svg>
<svg style="position:absolute;left:34px;top:422px" width="17" height="16" viewBox="0 0 17 16"><defs><filter id="b22" x="-20%" y="-20%" width="140%" height="140%"><feGaussianBlur stdDeviation="0.4"/></filter></defs><g filter="url(#b22)"><rect x="0" y="1" width="3" height="1" fill="#505052"/><rect x="5" y="1" width="3" height="1" fill="#1c1c1c"/><rect x="0" y="2" width="3" height="1" fill="#505052"/><rect x="3" y="2" width="2" height="1" fill="#d8d8cc"/><rect x="5" y="2" width="1" height="1" fill="#1c1c1c"/><rect x="6" y="2" width="4" height="1" fill="#d8d8cc"/><rect x="10" y="2" width="5" height="1" fill="#a8907a"/><rect x="0" y="3" width="2" height="1" fill="#505052"/><rect x="2" y="3" width="2" height="1" fill="#1c1c1c"/><rect x="4" y="3" width="6" height="1" fill="#d8d8cc"/><rect x="10" y="3" width="4" height="1" fill="#4a3428"/><rect x="14" y="3" width="1" height="1" fill="#a8907a"/><rect x="1" y="4" width="1" height="1" fill="#505052"/><rect x="2" y="4" width="1" height="1" fill="#1c1c1c"/><rect x="3" y="4" width="1" height="1" fill="#d8d8cc"/><rect x="4" y="4" width="1" height="1" fill="#1c1c1c"/><rect x="5" y="4" width="1" height="1" fill="#d8d8cc"/><rect x="6" y="4" width="1" height="1" fill="#1c1c1c"/><rect x="7" y="4" width="2" height="1" fill="#d8d8cc"/><rect x="9" y="4" width="1" height="1" fill="#a8907a"/><rect x="10" y="4" width="3" height="1" fill="#4a3428"/><rect x="13" y="4" width="1" height="1" fill="#a8907a"/><rect x="14" y="4" width="1" height="1" fill="#6a6a68"/><rect x="1" y="5" width="3" height="1" fill="#d8d8cc"/><rect x="4" y="5" width="1" height="1" fill="#1c1c1c"/><rect x="5" y="5" width="1" height="1" fill="#d8d8cc"/><rect x="6" y="5" width="1" height="1" fill="#1c1c1c"/><rect x="7" y="5" width="1" height="1" fill="#d8d8cc"/><rect x="8" y="5" width="1" height="1" fill="#1c1c1c"/><rect x="9" y="5" width="5" height="1" fill="#a8907a"/><rect x="14" y="5" width="2" height="1" fill="#6a6a68"/><rect x="0" y="6" width="1" height="1" fill="#d8d8cc"/><rect x="1" y="6" width="6" height="1" fill="#1c1c1c"/><rect x="7" y="6" width="2" height="1" fill="#d8d8cc"/><rect x="9" y="6" width="1" height="1" fill="#1c1c1c"/><rect x="10" y="6" width="3" height="1" fill="#a8907a"/><rect x="13" y="6" width="1" height="1" fill="#4a3428"/><rect x="14" y="6" width="2" height="1" fill="#6a6a68"/><rect x="1" y="7" width="6" height="1" fill="#1c1c1c"/><rect x="7" y="7" width="1" height="1" fill="#d8d8cc"/><rect x="8" y="7" width="3" height="1" fill="#6a6a68"/><rect x="11" y="7" width="1" height="1" fill="#a8907a"/><rect x="12" y="7" width="1" height="1" fill="#4a3428"/><rect x="13" y="7" width="1" height="1" fill="#a8907a"/><rect x="14" y="7" width="2" height="1" fill="#6a6a68"/><rect x="5" y="8" width="10" height="1" fill="#6a6a68"/><rect x="7" y="9" width="5" height="1" fill="#6a6a68"/></g></svg>
<div class="t" style="left:51.6px;top:422px;font-size:11px;line-height:13px;color:#000;letter-spacing:-0.217px;">Dread Guristas Heavy Missile Launcher</div>
<div class="t" style="left:442.5px;top:422px;font-size:11px;line-height:13px;color:#000;letter-spacing:-0.133px;">41.3</div>
<div class="t" style="left:475.5px;top:422px;font-size:11px;line-height:13px;color:#000;letter-spacing:-1.500px;">81</div>
<div class="t" style="left:538.5px;top:422px;font-size:11px;line-height:13px;color:#000;letter-spacing:-0.100px;">84.4</div>
<div class="t" style="left:601.3px;top:422px;font-size:11px;line-height:13px;color:#000;letter-spacing:-0.191px;">Caldari Navy Scourge Heavy Missile</div>
<svg style="position:absolute;left:18px;top:440px" width="10" height="10" viewBox="0 0 10 10"><defs><filter id="b23" x="-20%" y="-20%" width="140%" height="140%"><feGaussianBlur stdDeviation="0.3"/></filter></defs><g filter="url(#b23)"><path d="M1.8 5.5 L4 8.2 L8.6 1.8" stroke="#78b838" stroke-width="2.3" fill="none" stroke-linejoin="round" stroke-linecap="round"/><path d="M2.2 5.2 L4 7.4 L7.8 2.4" stroke="#c0ec80" stroke-width="0.8" fill="none"/></g></svg>
<svg style="position:absolute;left:34px;top:440px" width="17" height="16" viewBox="0 0 17 16"><defs><filter id="b24" x="-20%" y="-20%" width="140%" height="140%"><feGaussianBlur stdDeviation="0.4"/></filter></defs><g filter="url(#b24)"><rect x="0" y="1" width="3" height="1" fill="#505052"/><rect x="5" y="1" width="3" height="1" fill="#1c1c1c"/><rect x="0" y="2" width="3" height="1" fill="#505052"/><rect x="3" y="2" width="2" height="1" fill="#d8d8cc"/><rect x="5" y="2" width="1" height="1" fill="#1c1c1c"/><rect x="6" y="2" width="4" height="1" fill="#d8d8cc"/><rect x="10" y="2" width="5" height="1" fill="#a8907a"/><rect x="0" y="3" width="2" height="1" fill="#505052"/><rect x="2" y="3" width="2" height="1" fill="#1c1c1c"/><rect x="4" y="3" width="6" height="1" fill="#d8d8cc"/><rect x="10" y="3" width="4" height="1" fill="#4a3428"/><rect x="14" y="3" width="1" height="1" fill="#a8907a"/><rect x="1" y="4" width="1" height="1" fill="#505052"/><rect x="2" y="4" width="1" height="1" fill="#1c1c1c"/><rect x="3" y="4" width="1" height="1" fill="#d8d8cc"/><rect x="4" y="4" width="1" height="1" fill="#1c1c1c"/><rect x="5" y="4" width="1" height="1" fill="#d8d8cc"/><rect x="6" y="4" width="1" height="1" fill="#1c1c1c"/><rect x="7" y="4" width="2" height="1" fill="#d8d8cc"/><rect x="9" y="4" width="1" height="1" fill="#a8907a"/><rect x="10" y="4" width="3" height="1" fill="#4a3428"/><rect x="13" y="4" width="1" height="1" fill="#a8907a"/><rect x="14" y="4" width="1" height="1" fill="#6a6a68"/><rect x="1" y="5" width="3" height="1" fill="#d8d8cc"/><rect x="4" y="5" width="1" height="1" fill="#1c1c1c"/><rect x="5" y="5" width="1" height="1" fill="#d8d8cc"/><rect x="6" y="5" width="1" height="1" fill="#1c1c1c"/><rect x="7" y="5" width="1" height="1" fill="#d8d8cc"/><rect x="8" y="5" width="1" height="1" fill="#1c1c1c"/><rect x="9" y="5" width="5" height="1" fill="#a8907a"/><rect x="14" y="5" width="2" height="1" fill="#6a6a68"/><rect x="0" y="6" width="1" height="1" fill="#d8d8cc"/><rect x="1" y="6" width="6" height="1" fill="#1c1c1c"/><rect x="7" y="6" width="2" height="1" fill="#d8d8cc"/><rect x="9" y="6" width="1" height="1" fill="#1c1c1c"/><rect x="10" y="6" width="3" height="1" fill="#a8907a"/><rect x="13" y="6" width="1" height="1" fill="#4a3428"/><rect x="14" y="6" width="2" height="1" fill="#6a6a68"/><rect x="1" y="7" width="6" height="1" fill="#1c1c1c"/><rect x="7" y="7" width="1" height="1" fill="#d8d8cc"/><rect x="8" y="7" width="3" height="1" fill="#6a6a68"/><rect x="11" y="7" width="1" height="1" fill="#a8907a"/><rect x="12" y="7" width="1" height="1" fill="#4a3428"/><rect x="13" y="7" width="1" height="1" fill="#a8907a"/><rect x="14" y="7" width="2" height="1" fill="#6a6a68"/><rect x="5" y="8" width="10" height="1" fill="#6a6a68"/><rect x="7" y="9" width="5" height="1" fill="#6a6a68"/></g></svg>
<div class="t" style="left:51.6px;top:440px;font-size:11px;line-height:13px;color:#000;letter-spacing:-0.217px;">Dread Guristas Heavy Missile Launcher</div>
<div class="t" style="left:442.5px;top:440px;font-size:11px;line-height:13px;color:#000;letter-spacing:-0.133px;">41.3</div>
<div class="t" style="left:475.5px;top:440px;font-size:11px;line-height:13px;color:#000;letter-spacing:-1.500px;">81</div>
<div class="t" style="left:538.5px;top:440px;font-size:11px;line-height:13px;color:#000;letter-spacing:-0.100px;">84.4</div>
<div class="t" style="left:601.3px;top:440px;font-size:11px;line-height:13px;color:#000;letter-spacing:-0.191px;">Caldari Navy Scourge Heavy Missile</div>
<svg style="position:absolute;left:18px;top:458px" width="10" height="10" viewBox="0 0 10 10"><defs><filter id="b25" x="-20%" y="-20%" width="140%" height="140%"><feGaussianBlur stdDeviation="0.3"/></filter></defs><g filter="url(#b25)"><path d="M1.8 5.5 L4 8.2 L8.6 1.8" stroke="#78b838" stroke-width="2.3" fill="none" stroke-linejoin="round" stroke-linecap="round"/><path d="M2.2 5.2 L4 7.4 L7.8 2.4" stroke="#c0ec80" stroke-width="0.8" fill="none"/></g></svg>
<svg style="position:absolute;left:34px;top:458px" width="17" height="16" viewBox="0 0 17 16"><defs><filter id="b26" x="-20%" y="-20%" width="140%" height="140%"><feGaussianBlur stdDeviation="0.4"/></filter></defs><g filter="url(#b26)"><rect x="0" y="1" width="3" height="1" fill="#505052"/><rect x="5" y="1" width="3" height="1" fill="#1c1c1c"/><rect x="0" y="2" width="3" height="1" fill="#505052"/><rect x="3" y="2" width="2" height="1" fill="#d8d8cc"/><rect x="5" y="2" width="1" height="1" fill="#1c1c1c"/><rect x="6" y="2" width="4" height="1" fill="#d8d8cc"/><rect x="10" y="2" width="5" height="1" fill="#a8907a"/><rect x="0" y="3" width="2" height="1" fill="#505052"/><rect x="2" y="3" width="2" height="1" fill="#1c1c1c"/><rect x="4" y="3" width="6" height="1" fill="#d8d8cc"/><rect x="10" y="3" width="4" height="1" fill="#4a3428"/><rect x="14" y="3" width="1" height="1" fill="#a8907a"/><rect x="1" y="4" width="1" height="1" fill="#505052"/><rect x="2" y="4" width="1" height="1" fill="#1c1c1c"/><rect x="3" y="4" width="1" height="1" fill="#d8d8cc"/><rect x="4" y="4" width="1" height="1" fill="#1c1c1c"/><rect x="5" y="4" width="1" height="1" fill="#d8d8cc"/><rect x="6" y="4" width="1" height="1" fill="#1c1c1c"/><rect x="7" y="4" width="2" height="1" fill="#d8d8cc"/><rect x="9" y="4" width="1" height="1" fill="#a8907a"/><rect x="10" y="4" width="3" height="1" fill="#4a3428"/><rect x="13" y="4" width="1" height="1" fill="#a8907a"/><rect x="14" y="4" width="1" height="1" fill="#6a6a68"/><rect x="1" y="5" width="3" height="1" fill="#d8d8cc"/><rect x="4" y="5" width="1" height="1" fill="#1c1c1c"/><rect x="5" y="5" width="1" height="1" fill="#d8d8cc"/><rect x="6" y="5" width="1" height="1" fill="#1c1c1c"/><rect x="7" y="5" width="1" height="1" fill="#d8d8cc"/><rect x="8" y="5" width="1" height="1" fill="#1c1c1c"/><rect x="9" y="5" width="5" height="1" fill="#a8907a"/><rect x="14" y="5" width="2" height="1" fill="#6a6a68"/><rect x="0" y="6" width="1" height="1" fill="#d8d8cc"/><rect x="1" y="6" width="6" height="1" fill="#1c1c1c"/><rect x="7" y="6" width="2" height="1" fill="#d8d8cc"/><rect x="9" y="6" width="1" height="1" fill="#1c1c1c"/><rect x="10" y="6" width="3" height="1" fill="#a8907a"/><rect x="13" y="6" width="1" height="1" fill="#4a3428"/><rect x="14" y="6" width="2" height="1" fill="#6a6a68"/><rect x="1" y="7" width="6" height="1" fill="#1c1c1c"/><rect x="7" y="7" width="1" height="1" fill="#d8d8cc"/><rect x="8" y="7" width="3" height="1" fill="#6a6a68"/><rect x="11" y="7" width="1" height="1" fill="#a8907a"/><rect x="12" y="7" width="1" height="1" fill="#4a3428"/><rect x="13" y="7" width="1" height="1" fill="#a8907a"/><rect x="14" y="7" width="2" height="1" fill="#6a6a68"/><rect x="5" y="8" width="10" height="1" fill="#6a6a68"/><rect x="7" y="9" width="5" height="1" fill="#6a6a68"/></g></svg>
<div class="t" style="left:51.6px;top:458px;font-size:11px;line-height:13px;color:#000;letter-spacing:-0.217px;">Dread Guristas Heavy Missile Launcher</div>
<div class="t" style="left:442.5px;top:458px;font-size:11px;line-height:13px;color:#000;letter-spacing:-0.133px;">41.3</div>
<div class="t" style="left:475.5px;top:458px;font-size:11px;line-height:13px;color:#000;letter-spacing:-1.500px;">81</div>
<div class="t" style="left:538.5px;top:458px;font-size:11px;line-height:13px;color:#000;letter-spacing:-0.100px;">84.4</div>
<div class="t" style="left:601.3px;top:458px;font-size:11px;line-height:13px;color:#000;letter-spacing:-0.191px;">Caldari Navy Scourge Heavy Missile</div>
<svg style="position:absolute;left:18px;top:476px" width="10" height="10" viewBox="0 0 10 10"><defs><filter id="b27" x="-20%" y="-20%" width="140%" height="140%"><feGaussianBlur stdDeviation="0.3"/></filter></defs><g filter="url(#b27)"><path d="M1.8 5.5 L4 8.2 L8.6 1.8" stroke="#78b838" stroke-width="2.3" fill="none" stroke-linejoin="round" stroke-linecap="round"/><path d="M2.2 5.2 L4 7.4 L7.8 2.4" stroke="#c0ec80" stroke-width="0.8" fill="none"/></g></svg>
<svg style="position:absolute;left:34px;top:476px" width="17" height="16" viewBox="0 0 17 16"><defs><filter id="b28" x="-20%" y="-20%" width="140%" height="140%"><feGaussianBlur stdDeviation="0.4"/></filter></defs><g filter="url(#b28)"><rect x="0" y="1" width="3" height="1" fill="#505052"/><rect x="5" y="1" width="3" height="1" fill="#1c1c1c"/><rect x="0" y="2" width="3" height="1" fill="#505052"/><rect x="3" y="2" width="2" height="1" fill="#d8d8cc"/><rect x="5" y="2" width="1" height="1" fill="#1c1c1c"/><rect x="6" y="2" width="4" height="1" fill="#d8d8cc"/><rect x="10" y="2" width="5" height="1" fill="#a8907a"/><rect x="0" y="3" width="2" height="1" fill="#505052"/><rect x="2" y="3" width="2" height="1" fill="#1c1c1c"/><rect x="4" y="3" width="6" height="1" fill="#d8d8cc"/><rect x="10" y="3" width="4" height="1" fill="#4a3428"/><rect x="14" y="3" width="1" height="1" fill="#a8907a"/><rect x="1" y="4" width="1" height="1" fill="#505052"/><rect x="2" y="4" width="1" height="1" fill="#1c1c1c"/><rect x="3" y="4" width="1" height="1" fill="#d8d8cc"/><rect x="4" y="4" width="1" height="1" fill="#1c1c1c"/><rect x="5" y="4" width="1" height="1" fill="#d8d8cc"/><rect x="6" y="4" width="1" height="1" fill="#1c1c1c"/><rect x="7" y="4" width="2" height="1" fill="#d8d8cc"/><rect x="9" y="4" width="1" height="1" fill="#a8907a"/><rect x="10" y="4" width="3" height="1" fill="#4a3428"/><rect x="13" y="4" width="1" height="1" fill="#a8907a"/><rect x="14" y="4" width="1" height="1" fill="#6a6a68"/><rect x="1" y="5" width="3" height="1" fill="#d8d8cc"/><rect x="4" y="5" width="1" height="1" fill="#1c1c1c"/><rect x="5" y="5" width="1" height="1" fill="#d8d8cc"/><rect x="6" y="5" width="1" height="1" fill="#1c1c1c"/><rect x="7" y="5" width="1" height="1" fill="#d8d8cc"/><rect x="8" y="5" width="1" height="1" fill="#1c1c1c"/><rect x="9" y="5" width="5" height="1" fill="#a8907a"/><rect x="14" y="5" width="2" height="1" fill="#6a6a68"/><rect x="0" y="6" width="1" height="1" fill="#d8d8cc"/><rect x="1" y="6" width="6" height="1" fill="#1c1c1c"/><rect x="7" y="6" width="2" height="1" fill="#d8d8cc"/><rect x="9" y="6" width="1" height="1" fill="#1c1c1c"/><rect x="10" y="6" width="3" height="1" fill="#a8907a"/><rect x="13" y="6" width="1" height="1" fill="#4a3428"/><rect x="14" y="6" width="2" height="1" fill="#6a6a68"/><rect x="1" y="7" width="6" height="1" fill="#1c1c1c"/><rect x="7" y="7" width="1" height="1" fill="#d8d8cc"/><rect x="8" y="7" width="3" height="1" fill="#6a6a68"/><rect x="11" y="7" width="1" height="1" fill="#a8907a"/><rect x="12" y="7" width="1" height="1" fill="#4a3428"/><rect x="13" y="7" width="1" height="1" fill="#a8907a"/><rect x="14" y="7" width="2" height="1" fill="#6a6a68"/><rect x="5" y="8" width="10" height="1" fill="#6a6a68"/><rect x="7" y="9" width="5" height="1" fill="#6a6a68"/></g></svg>
<div class="t" style="left:51.6px;top:476px;font-size:11px;line-height:13px;color:#000;letter-spacing:-0.217px;">Dread Guristas Heavy Missile Launcher</div>
<div class="t" style="left:442.5px;top:476px;font-size:11px;line-height:13px;color:#000;letter-spacing:-0.133px;">41.3</div>
<div class="t" style="left:475.5px;top:476px;font-size:11px;line-height:13px;color:#000;letter-spacing:-1.500px;">81</div>
<div class="t" style="left:538.5px;top:476px;font-size:11px;line-height:13px;color:#000;letter-spacing:-0.100px;">84.4</div>
<div class="t" style="left:601.3px;top:476px;font-size:11px;line-height:13px;color:#000;letter-spacing:-0.191px;">Caldari Navy Scourge Heavy Missile</div>
<svg style="position:absolute;left:18px;top:494px" width="10" height="10" viewBox="0 0 10 10"><defs><filter id="b29" x="-20%" y="-20%" width="140%" height="140%"><feGaussianBlur stdDeviation="0.3"/></filter></defs><g filter="url(#b29)"><path d="M1.8 5.5 L4 8.2 L8.6 1.8" stroke="#78b838" stroke-width="2.3" fill="none" stroke-linejoin="round" stroke-linecap="round"/><path d="M2.2 5.2 L4 7.4 L7.8 2.4" stroke="#c0ec80" stroke-width="0.8" fill="none"/></g></svg>
<svg style="position:absolute;left:34px;top:494px" width="17" height="16" viewBox="0 0 17 16"><defs><filter id="b30" x="-20%" y="-20%" width="140%" height="140%"><feGaussianBlur stdDeviation="0.4"/></filter></defs><g filter="url(#b30)"><rect x="0" y="1" width="3" height="1" fill="#505052"/><rect x="5" y="1" width="3" height="1" fill="#1c1c1c"/><rect x="0" y="2" width="3" height="1" fill="#505052"/><rect x="3" y="2" width="2" height="1" fill="#d8d8cc"/><rect x="5" y="2" width="1" height="1" fill="#1c1c1c"/><rect x="6" y="2" width="4" height="1" fill="#d8d8cc"/><rect x="10" y="2" width="5" height="1" fill="#a8907a"/><rect x="0" y="3" width="2" height="1" fill="#505052"/><rect x="2" y="3" width="2" height="1" fill="#1c1c1c"/><rect x="4" y="3" width="6" height="1" fill="#d8d8cc"/><rect x="10" y="3" width="4" height="1" fill="#4a3428"/><rect x="14" y="3" width="1" height="1" fill="#a8907a"/><rect x="1" y="4" width="1" height="1" fill="#505052"/><rect x="2" y="4" width="1" height="1" fill="#1c1c1c"/><rect x="3" y="4" width="1" height="1" fill="#d8d8cc"/><rect x="4" y="4" width="1" height="1" fill="#1c1c1c"/><rect x="5" y="4" width="1" height="1" fill="#d8d8cc"/><rect x="6" y="4" width="1" height="1" fill="#1c1c1c"/><rect x="7" y="4" width="2" height="1" fill="#d8d8cc"/><rect x="9" y="4" width="1" height="1" fill="#a8907a"/><rect x="10" y="4" width="3" height="1" fill="#4a3428"/><rect x="13" y="4" width="1" height="1" fill="#a8907a"/><rect x="14" y="4" width="1" height="1" fill="#6a6a68"/><rect x="1" y="5" width="3" height="1" fill="#d8d8cc"/><rect x="4" y="5" width="1" height="1" fill="#1c1c1c"/><rect x="5" y="5" width="1" height="1" fill="#d8d8cc"/><rect x="6" y="5" width="1" height="1" fill="#1c1c1c"/><rect x="7" y="5" width="1" height="1" fill="#d8d8cc"/><rect x="8" y="5" width="1" height="1" fill="#1c1c1c"/><rect x="9" y="5" width="5" height="1" fill="#a8907a"/><rect x="14" y="5" width="2" height="1" fill="#6a6a68"/><rect x="0" y="6" width="1" height="1" fill="#d8d8cc"/><rect x="1" y="6" width="6" height="1" fill="#1c1c1c"/><rect x="7" y="6" width="2" height="1" fill="#d8d8cc"/><rect x="9" y="6" width="1" height="1" fill="#1c1c1c"/><rect x="10" y="6" width="3" height="1" fill="#a8907a"/><rect x="13" y="6" width="1" height="1" fill="#4a3428"/><rect x="14" y="6" width="2" height="1" fill="#6a6a68"/><rect x="1" y="7" width="6" height="1" fill="#1c1c1c"/><rect x="7" y="7" width="1" height="1" fill="#d8d8cc"/><rect x="8" y="7" width="3" height="1" fill="#6a6a68"/><rect x="11" y="7" width="1" height="1" fill="#a8907a"/><rect x="12" y="7" width="1" height="1" fill="#4a3428"/><rect x="13" y="7" width="1" height="1" fill="#a8907a"/><rect x="14" y="7" width="2" height="1" fill="#6a6a68"/><rect x="5" y="8" width="10" height="1" fill="#6a6a68"/><rect x="7" y="9" width="5" height="1" fill="#6a6a68"/></g></svg>
<div class="t" style="left:51.6px;top:494px;font-size:11px;line-height:13px;color:#000;letter-spacing:-0.217px;">Dread Guristas Heavy Missile Launcher</div>
<div class="t" style="left:442.5px;top:494px;font-size:11px;line-height:13px;color:#000;letter-spacing:-0.133px;">41.3</div>
<div class="t" style="left:475.5px;top:494px;font-size:11px;line-height:13px;color:#000;letter-spacing:-1.500px;">81</div>
<div class="t" style="left:538.5px;top:494px;font-size:11px;line-height:13px;color:#000;letter-spacing:-0.100px;">84.4</div>
<div class="t" style="left:601.3px;top:494px;font-size:11px;line-height:13px;color:#000;letter-spacing:-0.191px;">Caldari Navy Scourge Heavy Missile</div>
<svg style="position:absolute;left:18px;top:512px" width="10" height="10" viewBox="0 0 10 10"><defs><filter id="b31" x="-20%" y="-20%" width="140%" height="140%"><feGaussianBlur stdDeviation="0.3"/></filter></defs><g filter="url(#b31)"><path d="M1.8 5.5 L4 8.2 L8.6 1.8" stroke="#78b838" stroke-width="2.3" fill="none" stroke-linejoin="round" stroke-linecap="round"/><path d="M2.2 5.2 L4 7.4 L7.8 2.4" stroke="#c0ec80" stroke-width="0.8" fill="none"/></g></svg>
<svg style="position:absolute;left:34px;top:510px" width="17" height="16" viewBox="0 0 17 16"><defs><filter id="b32" x="-20%" y="-20%" width="140%" height="140%"><feGaussianBlur stdDeviation="0.3"/></filter></defs><g filter="url(#b32)"><path d="M5 2 L10 1 L12 4 L11 12 L6 13 L3 10 Z" fill="#6a2a28"/><path d="M4 5 L9 2 L11 4 L6 8 Z" fill="#d8b8b0"/><path d="M5 9 L10 6 L11 11 L7 12 Z" fill="#3a1210"/><circle cx="9" cy="3" r="1.6" fill="#e85048"/><path d="M2 10 L5 8" stroke="#a04040" stroke-width="1.5"/></g></svg>
<div class="t" style="left:51.6px;top:512px;font-size:11px;line-height:13px;color:#000;letter-spacing:-0.210px;">Corpum A-Type Medium Nosferatu</div>
<div class="t" style="left:442.5px;top:512px;font-size:11px;line-height:13px;color:#000;letter-spacing:-0.220px;">25</div>
<div class="t" style="left:475.5px;top:512px;font-size:11px;line-height:13px;color:#000;letter-spacing:-0.220px;">228</div>
<div class="t" style="left:505.8px;top:512px;font-size:11px;line-height:13px;color:#000;letter-spacing:-0.220px;">+5.5</div>
<div class="t" style="left:537.5px;top:512px;font-size:11px;line-height:13px;color:#000;letter-spacing:-0.220px;">19.5</div>
<div class="t" style="left:24.8px;top:543px;font-size:11px;line-height:13px;font-weight:bold;color:#000;letter-spacing:0.412px;">Rig slots</div>
<div style="position:absolute;left:11px;top:557px;width:290px;height:1px;background:linear-gradient(to right,#a8a8ac,#b8b8bc 60%,rgba(255,255,255,0));"></div>
<svg style="position:absolute;left:34px;top:570px" width="17" height="16" viewBox="0 0 17 16"><defs><filter id="b33" x="-20%" y="-20%" width="140%" height="140%"><feGaussianBlur stdDeviation="0.3"/></filter></defs><g filter="url(#b33)"><rect x="0.5" y="0.5" width="15" height="15" rx="3.5" fill="#3e3c3c"/><rect x="1.8" y="1.8" width="12.4" height="12.4" rx="2.5" fill="#787676"/><path d="M3 3 L10 3 L13 7 L12 11 L7 7 Z" fill="#f0fafa"/><path d="M7 7 L13 8 L12 13 L8 11 Z" fill="#38c0c8"/><path d="M2 12 L6 14" stroke="#2a2a2a" stroke-width="1"/></g></svg>
<div class="t" style="left:52.6px;top:573px;font-size:11px;line-height:13px;color:#000;letter-spacing:-0.314px;">Auxiliary Thrusters II</div>
<div class="t" style="left:442.5px;top:573px;font-size:11px;line-height:13px;color:#000;letter-spacing:-0.220px;">0</div>
<div class="t" style="left:475.5px;top:573px;font-size:11px;line-height:13px;color:#000;letter-spacing:-0.220px;">0</div>
<svg style="position:absolute;left:34px;top:588px" width="17" height="16" viewBox="0 0 17 16"><defs><filter id="b34" x="-20%" y="-20%" width="140%" height="140%"><feGaussianBlur stdDeviation="0.3"/></filter></defs><g filter="url(#b34)"><rect x="0.5" y="0.5" width="15" height="15" rx="3.5" fill="#3e3c3c"/><rect x="1.8" y="1.8" width="12.4" height="12.4" rx="2.5" fill="#787676"/><path d="M3 3 L10 3 L13 7 L12 11 L7 7 Z" fill="#f0fafa"/><path d="M7 7 L13 8 L12 13 L8 11 Z" fill="#38c0c8"/><path d="M2 12 L6 14" stroke="#2a2a2a" stroke-width="1"/></g></svg>
<div class="t" style="left:51.6px;top:591px;font-size:11px;line-height:13px;color:#000;letter-spacing:-0.148px;">Polycarbon Engine Housing II</div>
<div class="t" style="left:442.5px;top:591px;font-size:11px;line-height:13px;color:#000;letter-spacing:-0.220px;">0</div>
<div class="t" style="left:475.5px;top:591px;font-size:11px;line-height:13px;color:#000;letter-spacing:-0.220px;">0</div>
<div style="position:absolute;left:476px;top:140px;width:1px;height:1px;background:#606060;"></div>
<div style="position:absolute;left:476px;top:158px;width:1px;height:1px;background:#606060;"></div>
<div style="position:absolute;left:476px;top:176px;width:1px;height:1px;background:#606060;"></div>
<div style="position:absolute;left:9px;top:662px;width:957px;height:250px;border:1px solid #8a96a4;box-sizing:border-box;background:#fff;"></div>
<div style="position:absolute;left:17px;top:666px;width:13px;height:13px;border:1px solid #3c5a52;box-sizing:border-box;background:linear-gradient(135deg,#e0ecd8,#f8fff4);"></div>
<svg style="position:absolute;left:19px;top:668px" width="9" height="9" viewBox="0 0 9 9"><path d="M1 4 L3.5 6.8 L8 1.8" stroke="#2c8a3a" stroke-width="2.2" fill="none"/></svg>
<div class="t" style="left:35.4px;top:667px;font-size:11px;line-height:13px;color:#000;letter-spacing:-0.078px;">Slot 1: Snake Alpha</div>
<div style="position:absolute;left:17px;top:683px;width:13px;height:13px;border:1px solid #3c5a52;box-sizing:border-box;background:linear-gradient(135deg,#e0ecd8,#f8fff4);"></div>
<svg style="position:absolute;left:19px;top:685px" width="9" height="9" viewBox="0 0 9 9"><path d="M1 4 L3.5 6.8 L8 1.8" stroke="#2c8a3a" stroke-width="2.2" fill="none"/></svg>
<div class="t" style="left:35.4px;top:684px;font-size:11px;line-height:13px;color:#000;letter-spacing:-0.071px;">Slot 2: Snake Beta</div>
<div style="position:absolute;left:17px;top:700px;width:13px;height:13px;border:1px solid #3c5a52;box-sizing:border-box;background:linear-gradient(135deg,#e0ecd8,#f8fff4);"></div>
<svg style="position:absolute;left:19px;top:702px" width="9" height="9" viewBox="0 0 9 9"><path d="M1 4 L3.5 6.8 L8 1.8" stroke="#2c8a3a" stroke-width="2.2" fill="none"/></svg>
<div class="t" style="left:35.4px;top:701px;font-size:11px;line-height:13px;color:#000;letter-spacing:-0.239px;">Slot 3: Snake Gamma</div>
<div style="position:absolute;left:17px;top:717px;width:13px;height:13px;border:1px solid #3c5a52;box-sizing:border-box;background:linear-gradient(135deg,#e0ecd8,#f8fff4);"></div>
<svg style="position:absolute;left:19px;top:719px" width="9" height="9" viewBox="0 0 9 9"><path d="M1 4 L3.5 6.8 L8 1.8" stroke="#2c8a3a" stroke-width="2.2" fill="none"/></svg>
<div class="t" style="left:35.4px;top:718px;font-size:11px;line-height:13px;color:#000;letter-spacing:-0.078px;">Slot 4: Snake Delta</div>
<div style="position:absolute;left:17px;top:734px;width:13px;height:13px;border:1px solid #3c5a52;box-sizing:border-box;background:linear-gradient(135deg,#e0ecd8,#f8fff4);"></div>
<svg style="position:absolute;left:19px;top:736px" width="9" height="9" viewBox="0 0 9 9"><path d="M1 4 L3.5 6.8 L8 1.8" stroke="#2c8a3a" stroke-width="2.2" fill="none"/></svg>
<div class="t" style="left:35.4px;top:735px;font-size:11px;line-height:13px;color:#000;letter-spacing:-0.110px;">Slot 5: Snake Epsilon</div>
<div style="position:absolute;left:17px;top:751px;width:13px;height:13px;border:1px solid #3c5a52;box-sizing:border-box;background:linear-gradient(135deg,#e0ecd8,#f8fff4);"></div>
<svg style="position:absolute;left:19px;top:753px" width="9" height="9" viewBox="0 0 9 9"><path d="M1 4 L3.5 6.8 L8 1.8" stroke="#2c8a3a" stroke-width="2.2" fill="none"/></svg>
<div class="t" style="left:35.4px;top:752px;font-size:11px;line-height:13px;color:#000;letter-spacing:-0.178px;">Slot 6: Snake Omega</div>
<div style="position:absolute;left:17px;top:768px;width:13px;height:13px;border:1px solid #3c5a52;box-sizing:border-box;background:linear-gradient(135deg,#e0ecd8,#f8fff4);"></div>
<svg style="position:absolute;left:19px;top:770px" width="9" height="9" viewBox="0 0 9 9"><path d="M1 4 L3.5 6.8 L8 1.8" stroke="#2c8a3a" stroke-width="2.2" fill="none"/></svg>
<div class="t" style="left:35.4px;top:769px;font-size:11px;line-height:13px;color:#000;letter-spacing:-0.135px;">Slot 7: Hardwiring - Eifyr and Co. &#39;Rogue&#39; AY-2</div>
<div style="position:absolute;left:17px;top:785px;width:13px;height:13px;border:1px solid #3c5a52;box-sizing:border-box;background:linear-gradient(135deg,#e0ecd8,#f8fff4);"></div>
<svg style="position:absolute;left:19px;top:787px" width="9" height="9" viewBox="0 0 9 9"><path d="M1 4 L3.5 6.8 L8 1.8" stroke="#2c8a3a" stroke-width="2.2" fill="none"/></svg>
<div class="t" style="left:35.4px;top:786px;font-size:11px;line-height:13px;color:#000;letter-spacing:-0.183px;">Slot 8: Zor&#39;s Custom Navigation Hyper-Link</div>
<div style="position:absolute;left:17px;top:802px;width:13px;height:13px;border:1px solid #3c5a52;box-sizing:border-box;background:linear-gradient(135deg,#e0ecd8,#f8fff4);"></div>
<svg style="position:absolute;left:19px;top:804px" width="9" height="9" viewBox="0 0 9 9"><path d="M1 4 L3.5 6.8 L8 1.8" stroke="#2c8a3a" stroke-width="2.2" fill="none"/></svg>
<div class="t" style="left:35.4px;top:803px;font-size:11px;line-height:13px;color:#000;letter-spacing:-0.145px;">Slot 9: Hardwiring - Zainou &#39;Deadeye&#39; ZMS1000</div>
<div style="position:absolute;left:17px;top:819px;width:13px;height:13px;border:1px solid #3c5a52;box-sizing:border-box;background:linear-gradient(135deg,#e0ecd8,#f8fff4);"></div>
<svg style="position:absolute;left:19px;top:821px" width="9" height="9" viewBox="0 0 9 9"><path d="M1 4 L3.5 6.8 L8 1.8" stroke="#2c8a3a" stroke-width="2.2" fill="none"/></svg>
<div class="t" style="left:35.4px;top:820px;font-size:11px;line-height:13px;color:#000;letter-spacing:-0.136px;">Slot 10: Hardwiring - Zainou &#39;Deadeye&#39; ZMM1000</div>
<div style="position:absolute;left:17px;top:836px;width:13px;height:13px;border:1px solid #3c5a52;box-sizing:border-box;background:linear-gradient(135deg,#e0ecd8,#f8fff4);"></div>
<svg style="position:absolute;left:19px;top:838px" width="9" height="9" viewBox="0 0 9 9"><path d="M1 4 L3.5 6.8 L8 1.8" stroke="#2c8a3a" stroke-width="2.2" fill="none"/></svg>
<div class="t" style="left:35.4px;top:837px;font-size:11px;line-height:13px;color:#000;letter-spacing:-0.168px;">Slot 1: Synth X-Instinct Booster</div>
<div style="position:absolute;left:17px;top:853px;width:13px;height:13px;border:1px solid #3c5a52;box-sizing:border-box;background:linear-gradient(135deg,#e0ecd8,#f8fff4);"></div>
<svg style="position:absolute;left:19px;top:855px" width="9" height="9" viewBox="0 0 9 9"><path d="M1 4 L3.5 6.8 L8 1.8" stroke="#2c8a3a" stroke-width="2.2" fill="none"/></svg>
<div class="t" style="left:35.4px;top:854px;font-size:11px;line-height:13px;color:#000;letter-spacing:-0.246px;">Slot 3: Synth Crash Booster</div>
<div class="t" style="left:122px;top:916px;font-size:11px;line-height:13px;color:#000;letter-spacing:0.000px;">Active drones: 5 / 5</div>
<div style="position:absolute;left:328px;top:915px;width:319px;height:14px;border:1px solid #8c8c8a;border-radius:3px;box-sizing:border-box;background:linear-gradient(to bottom,#efeee8,#e0ded4);"></div>
<div class="t" style="left:436px;top:916px;font-size:11px;line-height:13px;color:#000;letter-spacing:-0.250px;">Boosters and Implants</div>
<div class="t" style="left:766.7px;top:916px;font-size:11px;line-height:13px;color:#000;letter-spacing:-0.106px;">Projected effects</div>
<div style="position:absolute;left:973px;top:38px;width:249px;height:81px;border:1px solid #bdbcc5;border-radius:4px;box-sizing:border-box;box-shadow:inset 1px 1px 0 #f6f6f8, 1px 1px 0 #f0f0f4;"></div>
<div style="position:absolute;left:979px;top:33px;width:79.6px;height:11px;background:#e0dfe3;"></div>
<div class="t" style="left:980px;top:32px;font-size:11px;line-height:13px;color:#1f3f86;letter-spacing:-0.185px;">Ship Resources</div>
<svg style="position:absolute;left:977px;top:44px" width="27" height="23" viewBox="0 0 27 23"><defs><filter id="b35" x="-20%" y="-20%" width="140%" height="140%"><feGaussianBlur stdDeviation="0.45"/></filter></defs><g filter="url(#b35)"><ellipse cx="18" cy="20" rx="8" ry="2.5" fill="#a8a8b0" opacity="0.6"/><path d="M2 12 L14 6 L16 9 L4 15 Z" fill="#6a5c4a"/><path d="M3 11.5 L14 6.5" stroke="#d8c8a8" stroke-width="1"/><circle cx="3" cy="13.5" r="2.2" fill="#1e1a14"/><path d="M12 5 L19 1 L26 3 L25 9 L18 12 L12 9 Z" fill="#4a3e30"/><path d="M14 5 L19 2 L24 3.5 L18 6.5 Z" fill="#a89878"/><path d="M17 8.5 L24 5.5 L24 7.5 L17 10.5 Z" fill="#c8b898"/><path d="M20 3 L22 4" stroke="#1a1610" stroke-width="1.4"/><path d="M11 14 L15 11 L21 11.5 L21 19 L15 22 L11 19 Z" fill="#5a4c38"/><path d="M11 15.5 L15 17.5 L15 22 L11 19 Z" fill="#b8a888"/><path d="M15 17.5 L21 15.5 L21 19 L15 22 Z" fill="#2e261c"/><path d="M13 13 L18 12" stroke="#d0c0a0" stroke-width="1"/></g></svg>
<svg style="position:absolute;left:978px;top:70px" width="28" height="17" viewBox="0 0 28 17"><defs><filter id="b36" x="-20%" y="-20%" width="140%" height="140%"><feGaussianBlur stdDeviation="0.4"/></filter></defs><g filter="url(#b36)"><ellipse cx="15" cy="13" rx="12" ry="3.5" fill="#6a6040" opacity="0.7"/><path d="M2 6 L15 1 L27 4 L27 9 L13 14 L2 10 Z" fill="#909090"/><path d="M3 6 L15 1.5 L26 4.2 L13 8.5 Z" fill="#d8d8d8"/><path d="M5 5.5 L7 4.7 L9 6.5 L11 3.8 M12 6 L14 5 L16 7 L18 4.5" stroke="#2a2a2a" stroke-width="1.6" fill="none"/><path d="M2 7 L13 9 L13 13.5 L2 10 Z" fill="#f4f4f4"/><path d="M4 9 L11 10.5" stroke="#505050" stroke-width="1"/><path d="M13 9 L27 4.5 L27 9 L13 13.5 Z" fill="#5a5a5a"/><path d="M16 10 L25 7" stroke="#d8d8d8" stroke-width="0.8"/></g></svg>
<svg style="position:absolute;left:976px;top:92px" width="31" height="22" viewBox="0 0 31 22"><defs><filter id="b37" x="-20%" y="-20%" width="140%" height="140%"><feGaussianBlur stdDeviation="0.45"/></filter></defs><g filter="url(#b37)"><circle cx="12.5" cy="5.5" r="4" fill="none" stroke="#38383e" stroke-width="2.2"/><path d="M14 3.5 L28 6 L28 11 L14 9.5 Z" fill="#343c60"/><path d="M18 6 L19.5 6.2 M21.5 6.5 L23 6.7 M18 8 L19.5 8.2 M21.5 8.4 L23 8.6" stroke="#c8d0f0" stroke-width="1"/><path d="M28 8.5 L31 9" stroke="#303030" stroke-width="1.5"/><path d="M1.5 11.5 L18 17" stroke="#505058" stroke-width="3.6" stroke-linecap="round"/><path d="M5 16 L21 20" stroke="#6a6a74" stroke-width="3.4" stroke-linecap="round"/><path d="M2 10.5 L17 15.5 M6 15 L20 18.6" stroke="#b8b8c4" stroke-width="0.8"/><path d="M18 14 L24 17" stroke="#404048" stroke-width="2"/></g></svg>
<div class="t" style="left:1008.3px;top:48px;font-size:11px;line-height:13px;color:#000;letter-spacing:0.200px;">: 1</div>
<div class="t" style="left:1008.3px;top:72px;font-size:11px;line-height:13px;color:#000;letter-spacing:0.600px;">: 0</div>
<div class="t" style="left:1008.3px;top:96px;font-size:11px;line-height:13px;color:#000;letter-spacing:0.350px;">: 100</div>
<div style="position:absolute;left:1037px;top:47px;width:1px;height:64px;background:#a8a8b0;"></div>
<div style="position:absolute;left:1038px;top:47px;width:1px;height:64px;background:#f8f8fa;"></div>
<svg style="position:absolute;left:1043px;top:42px" width="28" height="23" viewBox="0 0 28 23"><defs><filter id="b38" x="-20%" y="-20%" width="140%" height="140%"><feGaussianBlur stdDeviation="0.45"/></filter></defs><g filter="url(#b38)"><path d="M1 9 L13 1 L27 5 L22 18 L14 22 L1 12 Z" fill="#1a6a5a"/><path d="M3 9 L13 2.5 L25 6 L15 13 Z" fill="#38b8a0"/><path d="M8 8.5 L13 5 L19 7 L14 10.5 Z" fill="#7ae0cc"/><path d="M3 10 L15 14 L14 21 L2 12 Z" fill="#2a8a78"/><path d="M15 14 L25 7 L21 17 L14 21 Z" fill="#0e4a40"/><path d="M4 10 L14 13" stroke="#a0f0e0" stroke-width="0.8"/></g></svg>
<svg style="position:absolute;left:1046px;top:66px" width="22" height="22" viewBox="0 0 22 22"><defs><filter id="b39" x="-20%" y="-20%" width="140%" height="140%"><feGaussianBlur stdDeviation="0.45"/></filter></defs><g filter="url(#b39)"><ellipse cx="11" cy="11" rx="9" ry="3.2" fill="none" stroke="#9a9284" stroke-width="1.3" transform="rotate(50 11 11)"/><ellipse cx="11" cy="11" rx="9" ry="3.2" fill="none" stroke="#b0a898" stroke-width="1.3" transform="rotate(-35 11 11)"/><ellipse cx="11" cy="11" rx="2.8" ry="9" fill="none" stroke="#7a7468" stroke-width="1.2" transform="rotate(15 11 11)"/><circle cx="11" cy="11" r="2.3" fill="#ece8dc"/></g></svg>
<svg style="position:absolute;left:1042px;top:92px" width="28" height="22" viewBox="0 0 28 22"><defs><filter id="b40" x="-20%" y="-20%" width="140%" height="140%"><feGaussianBlur stdDeviation="0.5"/></filter></defs><g filter="url(#b40)"><path d="M3 7 L9 3 L13 6 L11 10 L5 11 Z" fill="#7a7a80"/><path d="M4 1 L10 4 M1 9 L5 8" stroke="#4a4a50" stroke-width="1.3"/><path d="M14 6 L22 4 L25 8 L20 12 L15 11 Z" fill="#8a8a90"/><path d="M20 2 L26 7 M24 10 L27 12" stroke="#4a4a50" stroke-width="1.3"/><path d="M3 14 L10 11 L14 15 L10 20 L4 19 Z" fill="#6a6a70"/><path d="M1 16 L4 15 M8 21 L6 18" stroke="#3a3a40" stroke-width="1.3"/><path d="M13 13 L20 12 L23 17 L17 21 L12 18 Z" fill="#9a9aa0"/><path d="M8 7 L12 6 M6 16 L10 15 M16 15 L20 14 M17 8 L21 7" stroke="#e8e8f0" stroke-width="1"/><path d="M14 20 Q20 22 25 17" stroke="#d8a0a0" stroke-width="0.8" fill="none" opacity="0.6"/></g></svg>
<div style="position:absolute;left:1077px;top:43px;width:137px;height:10px;border:1px solid #505054;border-radius:4px;box-sizing:border-box;background:#f8fdf6;"></div>
<div style="position:absolute;left:1081px;top:46px;width:6px;height:4px;background:#9cc48e;box-shadow:inset 0 0 0 1px #84ae76;"></div>
<div style="position:absolute;left:1089px;top:46px;width:6px;height:4px;background:#9cc48e;box-shadow:inset 0 0 0 1px #84ae76;"></div>
<div style="position:absolute;left:1097px;top:46px;width:6px;height:4px;background:#9cc48e;box-shadow:inset 0 0 0 1px #84ae76;"></div>
<div style="position:absolute;left:1105px;top:46px;width:6px;height:4px;background:#9cc48e;box-shadow:inset 0 0 0 1px #84ae76;"></div>
<div style="position:absolute;left:1113px;top:46px;width:6px;height:4px;background:#9cc48e;box-shadow:inset 0 0 0 1px #84ae76;"></div>
<div style="position:absolute;left:1121px;top:46px;width:6px;height:4px;background:#9cc48e;box-shadow:inset 0 0 0 1px #84ae76;"></div>
<div style="position:absolute;left:1129px;top:46px;width:6px;height:4px;background:#9cc48e;box-shadow:inset 0 0 0 1px #84ae76;"></div>
<div style="position:absolute;left:1137px;top:46px;width:6px;height:4px;background:#9cc48e;box-shadow:inset 0 0 0 1px #84ae76;"></div>
<div style="position:absolute;left:1145px;top:46px;width:6px;height:4px;background:#9cc48e;box-shadow:inset 0 0 0 1px #84ae76;"></div>
<div style="position:absolute;left:1153px;top:46px;width:6px;height:4px;background:#9cc48e;box-shadow:inset 0 0 0 1px #84ae76;"></div>
<div style="position:absolute;left:1161px;top:46px;width:6px;height:4px;background:#9cc48e;box-shadow:inset 0 0 0 1px #84ae76;"></div>
<div style="position:absolute;left:1169px;top:46px;width:6px;height:4px;background:#9cc48e;box-shadow:inset 0 0 0 1px #84ae76;"></div>
<div style="position:absolute;left:1177px;top:46px;width:6px;height:4px;background:#9cc48e;box-shadow:inset 0 0 0 1px #84ae76;"></div>
<div style="position:absolute;left:1185px;top:46px;width:6px;height:4px;background:#9cc48e;box-shadow:inset 0 0 0 1px #84ae76;"></div>
<div style="position:absolute;left:1077px;top:67px;width:137px;height:10px;border:1px solid #505054;border-radius:4px;box-sizing:border-box;background:#f8fdf6;"></div>
<div style="position:absolute;left:1081px;top:70px;width:6px;height:4px;background:#9cc48e;box-shadow:inset 0 0 0 1px #84ae76;"></div>
<div style="position:absolute;left:1089px;top:70px;width:6px;height:4px;background:#9cc48e;box-shadow:inset 0 0 0 1px #84ae76;"></div>
<div style="position:absolute;left:1097px;top:70px;width:6px;height:4px;background:#9cc48e;box-shadow:inset 0 0 0 1px #84ae76;"></div>
<div style="position:absolute;left:1105px;top:70px;width:6px;height:4px;background:#9cc48e;box-shadow:inset 0 0 0 1px #84ae76;"></div>
<div style="position:absolute;left:1113px;top:70px;width:6px;height:4px;background:#9cc48e;box-shadow:inset 0 0 0 1px #84ae76;"></div>
<div style="position:absolute;left:1121px;top:70px;width:6px;height:4px;background:#9cc48e;box-shadow:inset 0 0 0 1px #84ae76;"></div>
<div style="position:absolute;left:1129px;top:70px;width:6px;height:4px;background:#9cc48e;box-shadow:inset 0 0 0 1px #84ae76;"></div>
<div style="position:absolute;left:1137px;top:70px;width:6px;height:4px;background:#9cc48e;box-shadow:inset 0 0 0 1px #84ae76;"></div>
<div style="position:absolute;left:1145px;top:70px;width:6px;height:4px;background:#9cc48e;box-shadow:inset 0 0 0 1px #84ae76;"></div>
<div style="position:absolute;left:1153px;top:70px;width:6px;height:4px;background:#9cc48e;box-shadow:inset 0 0 0 1px #84ae76;"></div>
<div style="position:absolute;left:1161px;top:70px;width:6px;height:4px;background:#9cc48e;box-shadow:inset 0 0 0 1px #84ae76;"></div>
<div style="position:absolute;left:1169px;top:70px;width:6px;height:4px;background:#9cc48e;box-shadow:inset 0 0 0 1px #84ae76;"></div>
<div style="position:absolute;left:1177px;top:70px;width:6px;height:4px;background:#9cc48e;box-shadow:inset 0 0 0 1px #84ae76;"></div>
<div style="position:absolute;left:1185px;top:70px;width:6px;height:4px;background:#9cc48e;box-shadow:inset 0 0 0 1px #84ae76;"></div>
<div style="position:absolute;left:1077px;top:91px;width:137px;height:10px;border:1px solid #505054;border-radius:4px;box-sizing:border-box;background:#f8fdf6;"></div>
<div style="position:absolute;left:1081px;top:94px;width:6px;height:4px;background:#9cc48e;box-shadow:inset 0 0 0 1px #84ae76;"></div>
<div style="position:absolute;left:1089px;top:94px;width:6px;height:4px;background:#9cc48e;box-shadow:inset 0 0 0 1px #84ae76;"></div>
<div style="position:absolute;left:1097px;top:94px;width:6px;height:4px;background:#9cc48e;box-shadow:inset 0 0 0 1px #84ae76;"></div>
<div style="position:absolute;left:1105px;top:94px;width:6px;height:4px;background:#9cc48e;box-shadow:inset 0 0 0 1px #84ae76;"></div>
<div style="position:absolute;left:1113px;top:94px;width:6px;height:4px;background:#9cc48e;box-shadow:inset 0 0 0 1px #84ae76;"></div>
<div style="position:absolute;left:1121px;top:94px;width:6px;height:4px;background:#9cc48e;box-shadow:inset 0 0 0 1px #84ae76;"></div>
<div style="position:absolute;left:1129px;top:94px;width:6px;height:4px;background:#9cc48e;box-shadow:inset 0 0 0 1px #84ae76;"></div>
<div style="position:absolute;left:1137px;top:94px;width:6px;height:4px;background:#9cc48e;box-shadow:inset 0 0 0 1px #84ae76;"></div>
<div style="position:absolute;left:1145px;top:94px;width:6px;height:4px;background:#9cc48e;box-shadow:inset 0 0 0 1px #84ae76;"></div>
<div style="position:absolute;left:1153px;top:94px;width:6px;height:4px;background:#9cc48e;box-shadow:inset 0 0 0 1px #84ae76;"></div>
<div style="position:absolute;left:1161px;top:94px;width:6px;height:4px;background:#9cc48e;box-shadow:inset 0 0 0 1px #84ae76;"></div>
<div style="position:absolute;left:1169px;top:94px;width:6px;height:4px;background:#9cc48e;box-shadow:inset 0 0 0 1px #84ae76;"></div>
<div style="position:absolute;left:1177px;top:94px;width:6px;height:4px;background:#9cc48e;box-shadow:inset 0 0 0 1px #84ae76;"></div>
<div style="position:absolute;left:1185px;top:94px;width:6px;height:4px;background:#9cc48e;box-shadow:inset 0 0 0 1px #84ae76;"></div>
<div style="position:absolute;left:1193px;top:94px;width:6px;height:4px;background:#9cc48e;box-shadow:inset 0 0 0 1px #84ae76;"></div>
<div style="position:absolute;left:1201px;top:94px;width:6px;height:4px;background:#9cc48e;box-shadow:inset 0 0 0 1px #84ae76;"></div>
<div style="position:absolute;left:1209px;top:94px;width:6px;height:4px;background:#9cc48e;box-shadow:inset 0 0 0 1px #84ae76;"></div>
<div class="t" style="left:1076.5px;top:54px;font-size:11px;line-height:13px;color:#000;letter-spacing:0.169px;">545.5 / 693.75</div>
<div class="t" style="left:1076.5px;top:78px;font-size:11px;line-height:13px;color:#000;letter-spacing:0.158px;">795 / 1025.62</div>
<div class="t" style="left:1077.5px;top:102px;font-size:11px;line-height:13px;color:#000;letter-spacing:0.317px;">25 / 25</div>
<div style="position:absolute;left:973px;top:128px;width:249px;height:797px;border:1px solid #bdbcc5;border-radius:4px;box-sizing:border-box;box-shadow:inset 1px 1px 0 #f6f6f8, 1px 1px 0 #f0f0f4;"></div>
<div style="position:absolute;left:980px;top:123px;width:81px;height:11px;background:#e0dfe3;"></div>
<div class="t" style="left:981px;top:122px;font-size:11px;line-height:13px;color:#1f3f86;letter-spacing:-0.357px;">Ship Parameters</div>
<div style="position:absolute;left:982px;top:140px;width:231px;height:60px;border:1px solid #bdbcc5;border-radius:4px;box-sizing:border-box;box-shadow:inset 1px 1px 0 #f6f6f8, 1px 1px 0 #f0f0f4;"></div>
<div style="position:absolute;left:988.5px;top:135px;width:153.4px;height:11px;background:#e0dfe3;"></div>
<div class="t" style="left:989.5px;top:134px;font-size:11px;line-height:13px;color:#1f3f86;letter-spacing:-0.116px;">Hitpoints (Effective HP: 73,301)</div>
<svg style="position:absolute;left:988px;top:145px" width="25" height="26" viewBox="0 0 25 26"><defs><radialGradient id="sg1" cx="0.5" cy="0.45" r="0.55"><stop offset="0" stop-color="#f4fcff"/><stop offset="0.45" stop-color="#9ad8f0"/><stop offset="1" stop-color="#d0ecf8" stop-opacity="0"/></radialGradient><linearGradient id="sg2" x1="0" y1="0" x2="0" y2="1"><stop offset="0" stop-color="#c8c8cc"/><stop offset="1" stop-color="#303034"/></linearGradient></defs><defs><filter id="b41" x="-20%" y="-20%" width="140%" height="140%"><feGaussianBlur stdDeviation="0.45"/></filter></defs><g filter="url(#b41)"><ellipse cx="12" cy="10" rx="9" ry="10" fill="url(#sg1)"/><ellipse cx="12" cy="20.5" rx="11" ry="4.2" fill="#2a2a2e"/><ellipse cx="12" cy="19.5" rx="9.5" ry="3.2" fill="url(#sg2)"/><ellipse cx="12" cy="19" rx="5" ry="1.8" fill="#e8f8ff"/></g></svg>
<svg style="position:absolute;left:1063px;top:148px" width="25" height="22" viewBox="0 0 25 22"><defs><linearGradient id="ag1" x1="0" y1="0" x2="0.3" y2="1"><stop offset="0" stop-color="#f4f4f6"/><stop offset="0.6" stop-color="#a0a0a6"/><stop offset="1" stop-color="#606066"/></linearGradient></defs><defs><filter id="b42" x="-20%" y="-20%" width="140%" height="140%"><feGaussianBlur stdDeviation="0.4"/></filter></defs><g filter="url(#b42)"><ellipse cx="13" cy="18.5" rx="10" ry="3" fill="#38383e" opacity="0.75"/><path d="M1 9 Q2 3 9 2 L17 1 Q23 2 24 8 L24 12 L20 11 Q19 7 15 7 L9 8 Q6 9 5 14 L5 17 L1 16 Z" fill="url(#ag1)"/><path d="M5 17 L5 14 Q6 9 9 8 L15 7 Q19 7 20 11 L20 13 Q16 10 11 12 Q8 14 8 18 Z" fill="#48484e"/><path d="M2 7 Q5 3 12 2.5 M4 9 Q8 5 15 4.5" stroke="#ffffff" stroke-width="0.9" fill="none"/><path d="M20 11 L24 12" stroke="#2a2a30" stroke-width="1"/></g></svg>
<svg style="position:absolute;left:1141px;top:148px" width="22" height="21" viewBox="0 0 22 21"><defs><filter id="b43" x="-20%" y="-20%" width="140%" height="140%"><feGaussianBlur stdDeviation="0.4"/></filter></defs><g filter="url(#b43)"><ellipse cx="12" cy="18" rx="9" ry="2.5" fill="#505058" opacity="0.4"/><path d="M11 1 L20 5.5 L20 15 L11 20 L2 15 L2 5.5 Z" fill="#4a3c30"/><path d="M11 3 L18 6.5 L18 14 L11 18 L4 14 L4 6.5 Z" fill="#b8aa98"/><path d="M11 3 L4 6.5 L4 14 L11 10.5 Z" fill="#e0d6c8"/><path d="M11 10.5 L18 14 L11 18 L4 14 Z" fill="#8a7a68"/><path d="M11 3 L11 10.5 L18 14 M11 10.5 L4 14" stroke="#3a2e24" stroke-width="1.3" fill="none"/></g></svg>
<div class="t" style="left:1016px;top:152px;font-size:11px;line-height:13px;color:#000;letter-spacing:-0.200px;">: 7284</div>
<div class="t" style="left:1091.5px;top:152px;font-size:11px;line-height:13px;color:#000;letter-spacing:0.160px;">: 4012</div>
<div class="t" style="left:1167px;top:152px;font-size:11px;line-height:13px;color:#000;letter-spacing:0.280px;">: 4805</div>
<svg style="position:absolute;left:987px;top:175px" width="15" height="16" viewBox="0 0 15 16"><defs><filter id="b44" x="-20%" y="-20%" width="140%" height="140%"><feGaussianBlur stdDeviation="0.35"/></filter></defs><g filter="url(#b44)"><circle cx="7" cy="8" r="6.8" fill="#2a88c0"/><circle cx="6" cy="6" r="4" fill="#70c8f0"/><path d="M8.5 2 L4 8.5 L7.5 8.5 L5.5 14 L11 7 L7.5 7 Z" fill="#f4ffff"/></g></svg>
<svg style="position:absolute;left:1002px;top:173px" width="4" height="23" viewBox="0 0 4 23"><defs><linearGradient id="gg" x1="0" x2="1"><stop offset="0" stop-color="#8898a8"/><stop offset="0.35" stop-color="#f4f8fc"/><stop offset="0.7" stop-color="#c8d0d8"/><stop offset="1" stop-color="#7a8896"/></linearGradient></defs><rect x="0.3" y="0.5" width="3.2" height="22" rx="1.5" fill="url(#gg)"/></svg>
<svg style="position:absolute;left:1041px;top:176px" width="18" height="15" viewBox="0 0 18 15"><defs><filter id="b45" x="-20%" y="-20%" width="140%" height="140%"><feGaussianBlur stdDeviation="0.4"/></filter></defs><g filter="url(#b45)"><path d="M1 6 Q6 2 12 3 Q9 5 17 4 Q12 7 17 8 Q11 9 16 12 Q8 13 2 11 Q5 9 1 9 Z" fill="#d82a18"/><path d="M3 7 Q8 5 13 6 M4 9 Q9 8 14 10" stroke="#ff9070" stroke-width="1" fill="none"/></g></svg>
<svg style="position:absolute;left:1058px;top:173px" width="4" height="23" viewBox="0 0 4 23"><defs><linearGradient id="gg" x1="0" x2="1"><stop offset="0" stop-color="#8898a8"/><stop offset="0.35" stop-color="#f4f8fc"/><stop offset="0.7" stop-color="#c8d0d8"/><stop offset="1" stop-color="#7a8896"/></linearGradient></defs><rect x="0.3" y="0.5" width="3.2" height="22" rx="1.5" fill="url(#gg)"/></svg>
<svg style="position:absolute;left:1099px;top:176px" width="16" height="15" viewBox="0 0 16 15"><defs><filter id="b46" x="-20%" y="-20%" width="140%" height="140%"><feGaussianBlur stdDeviation="0.5"/></filter></defs><g filter="url(#b46)"><path d="M1 9 L9 5 L15 7 L10 12 Z" fill="#a8a8ac"/><path d="M2 7 L9 6 M3 11 L9 9" stroke="#606064" stroke-width="1.2"/><circle cx="11" cy="8" r="3.2" fill="#ffffff"/><path d="M12 3 L13 6 M14 12 L12 10" stroke="#707074" stroke-width="1"/></g></svg>
<svg style="position:absolute;left:1114px;top:173px" width="4" height="23" viewBox="0 0 4 23"><defs><linearGradient id="gg" x1="0" x2="1"><stop offset="0" stop-color="#8898a8"/><stop offset="0.35" stop-color="#f4f8fc"/><stop offset="0.7" stop-color="#c8d0d8"/><stop offset="1" stop-color="#7a8896"/></linearGradient></defs><rect x="0.3" y="0.5" width="3.2" height="22" rx="1.5" fill="url(#gg)"/></svg>
<svg style="position:absolute;left:1156px;top:176px" width="15" height="16" viewBox="0 0 15 16"><defs><radialGradient id="exg" cx="0.55" cy="0.5" r="0.5"><stop offset="0" stop-color="#fff8d8"/><stop offset="0.35" stop-color="#f8a040"/><stop offset="0.75" stop-color="#b05020"/><stop offset="1" stop-color="#5a2a10" stop-opacity="0.6"/></radialGradient></defs><defs><filter id="b47" x="-20%" y="-20%" width="140%" height="140%"><feGaussianBlur stdDeviation="0.45"/></filter></defs><g filter="url(#b47)"><path d="M1 2 L5 3 L8 0.5 L10 3 L14 2 L13 6 L15 9 L12 11 L13 15 L9 13 L6 15.5 L5 12 L0.5 12 L2 8 L0.5 5 Z" fill="url(#exg)"/></g></svg>
<svg style="position:absolute;left:1171px;top:173px" width="4" height="23" viewBox="0 0 4 23"><defs><linearGradient id="gg" x1="0" x2="1"><stop offset="0" stop-color="#8898a8"/><stop offset="0.35" stop-color="#f4f8fc"/><stop offset="0.7" stop-color="#c8d0d8"/><stop offset="1" stop-color="#7a8896"/></linearGradient></defs><rect x="0.3" y="0.5" width="3.2" height="22" rx="1.5" fill="url(#gg)"/></svg>
<div class="t" style="left:1010.4px;top:172px;font-size:11px;line-height:13px;color:#000;letter-spacing:-0.475px;">86.3%</div>
<div class="t" style="left:1009.4px;top:184px;font-size:11px;line-height:13px;color:#000;letter-spacing:-0.800px;">50%</div>
<div class="t" style="left:1066.6px;top:172px;font-size:11px;line-height:13px;color:#000;letter-spacing:-0.475px;">91.3%</div>
<div class="t" style="left:1065.6px;top:184px;font-size:11px;line-height:13px;color:#000;letter-spacing:-0.225px;">79.4%</div>
<div class="t" style="left:1122.3px;top:172px;font-size:11px;line-height:13px;color:#000;letter-spacing:-0.475px;">89.1%</div>
<div class="t" style="left:1121.3px;top:184px;font-size:11px;line-height:13px;color:#000;letter-spacing:-0.250px;">53.1%</div>
<div class="t" style="left:1178.5px;top:172px;font-size:11px;line-height:13px;color:#000;letter-spacing:-0.475px;">85.4%</div>
<div class="t" style="left:1177.5px;top:184px;font-size:11px;line-height:13px;color:#000;letter-spacing:-0.800px;">10%</div>
<div style="position:absolute;left:982px;top:209px;width:72px;height:34px;border:1px solid #bdbcc5;border-radius:4px;box-sizing:border-box;box-shadow:inset 1px 1px 0 #f6f6f8, 1px 1px 0 #f0f0f4;"></div>
<div style="position:absolute;left:988.5px;top:204px;width:45.4px;height:11px;background:#e0dfe3;"></div>
<div class="t" style="left:989.5px;top:203px;font-size:11px;line-height:13px;color:#1f3f86;letter-spacing:0.067px;">Defence</div>
<svg style="position:absolute;left:987px;top:215px" width="23" height="23" viewBox="0 0 23 23"><defs><linearGradient id="dfg" x1="0" x2="1"><stop offset="0" stop-color="#f0f0f2"/><stop offset="0.45" stop-color="#a8a8ae"/><stop offset="0.55" stop-color="#4a3a36"/><stop offset="1" stop-color="#8a5a4a"/></linearGradient></defs><defs><filter id="b48" x="-20%" y="-20%" width="140%" height="140%"><feGaussianBlur stdDeviation="0.45"/></filter></defs><g filter="url(#b48)"><path d="M1.5 2 L21.5 2 L21.5 11 Q21.5 21.5 11.5 22.5 Q1.5 21.5 1.5 11 Z" fill="#78d4dc"/><path d="M4 3.5 L19 3.5 L19 11 Q19 19 11.5 20 Q4 19 4 11 Z" fill="url(#dfg)"/><path d="M6 4 L8 4 L8 18 Q6 16 6 11 Z" fill="#ffffff" opacity="0.7"/></g></svg>
<div class="t" style="left:1013.7px;top:214px;font-size:11px;line-height:13px;color:#000;letter-spacing:0.200px;">: 807</div>
<div class="t" style="left:1013.7px;top:226px;font-size:11px;line-height:13px;color:#000;letter-spacing:0.200px;">: 807</div>
<div style="position:absolute;left:1061px;top:209px;width:152px;height:34px;border:1px solid #bdbcc5;border-radius:4px;box-sizing:border-box;box-shadow:inset 1px 1px 0 #f6f6f8, 1px 1px 0 #f0f0f4;"></div>
<div style="position:absolute;left:1068px;top:204px;width:126.6px;height:11px;background:#e0dfe3;"></div>
<div class="t" style="left:1069px;top:203px;font-size:11px;line-height:13px;color:#1f3f86;letter-spacing:-0.216px;">Capacitor (Stable at: 41%)</div>
<svg style="position:absolute;left:1067px;top:216px" width="20" height="21" viewBox="0 0 20 21"><defs><linearGradient id="c1g" x1="0" y1="0" x2="1" y2="0.4"><stop offset="0" stop-color="#2a2418"/><stop offset="0.35" stop-color="#d8ccb4"/><stop offset="0.65" stop-color="#6a5a44"/><stop offset="1" stop-color="#2a2418"/></linearGradient></defs><defs><filter id="b49" x="-20%" y="-20%" width="140%" height="140%"><feGaussianBlur stdDeviation="0.45"/></filter></defs><g filter="url(#b49)"><path d="M2 16 L9 3 L14 5 L7 18 Z" fill="url(#c1g)"/><path d="M8 18 L14 8 L19 10 L13 20 Z" fill="url(#c1g)"/><ellipse cx="11.5" cy="4" rx="2.8" ry="1.6" fill="#f4f0e4" transform="rotate(25 11.5 4)"/><ellipse cx="16.5" cy="9" rx="2.8" ry="1.6" fill="#e8e4d8" transform="rotate(25 16.5 9)"/><path d="M4 19 L9 20" stroke="#2a2a2a" stroke-width="1.3"/></g></svg>
<div class="t" style="left:1092.6px;top:219px;font-size:11px;line-height:13px;color:#000;letter-spacing:-0.180px;">: 4134</div>
<svg style="position:absolute;left:1146px;top:216px" width="24" height="21" viewBox="0 0 24 21"><defs><linearGradient id="c2g" x1="0" y1="0" x2="0.3" y2="1"><stop offset="0" stop-color="#d8d0b8"/><stop offset="0.45" stop-color="#6a6048"/><stop offset="1" stop-color="#1e1a14"/></linearGradient></defs><defs><filter id="b50" x="-20%" y="-20%" width="140%" height="140%"><feGaussianBlur stdDeviation="0.45"/></filter></defs><g filter="url(#b50)"><ellipse cx="12" cy="17" rx="9" ry="2.5" fill="#606068" opacity="0.5"/><path d="M3 6 Q6 1 12 3 L21 9 Q22 15 17 18 L7 12 Q2 10 3 6 Z" fill="url(#c2g)"/><path d="M6 5 Q9 3 13 5" stroke="#f8f4e8" stroke-width="1.2" fill="none"/><ellipse cx="18.5" cy="13.5" rx="3.5" ry="4.8" fill="#5a5a5c" transform="rotate(-35 18.5 13.5)"/><ellipse cx="18.5" cy="13.5" rx="2" ry="3" fill="#9a9a9c" transform="rotate(-35 18.5 13.5)"/></g></svg>
<div class="t" style="left:1173.5px;top:213px;font-size:11px;line-height:13px;color:#000;letter-spacing:-0.367px;">- 29</div>
<div class="t" style="left:1173.5px;top:226px;font-size:11px;line-height:13px;color:#000;letter-spacing:-0.100px;">+30.2</div>
<div style="position:absolute;left:982px;top:252px;width:72px;height:57px;border:1px solid #bdbcc5;border-radius:4px;box-sizing:border-box;box-shadow:inset 1px 1px 0 #f6f6f8, 1px 1px 0 #f0f0f4;"></div>
<div style="position:absolute;left:988.5px;top:247px;width:50.8px;height:11px;background:#e0dfe3;"></div>
<div class="t" style="left:989.5px;top:246px;font-size:11px;line-height:13px;color:#1f3f86;letter-spacing:-0.275px;">Firepower</div>
<svg style="position:absolute;left:985px;top:258px" width="29" height="22" viewBox="0 0 29 22"><defs><linearGradient id="fpg" x1="0" y1="0" x2="0" y2="1"><stop offset="0" stop-color="#f0f0f4"/><stop offset="1" stop-color="#707078"/></linearGradient></defs><defs><filter id="b51" x="-20%" y="-20%" width="140%" height="140%"><feGaussianBlur stdDeviation="0.45"/></filter></defs><g filter="url(#b51)"><ellipse cx="17" cy="19" rx="9" ry="2.5" fill="#9090a0" opacity="0.5"/><path d="M1 9 L15 4 L17 9 L3 14 Z" fill="url(#fpg)"/><path d="M1 9 L3 14" stroke="#404048" stroke-width="1.5"/><rect x="14" y="1" width="11" height="10" rx="4" fill="url(#fpg)"/><path d="M16 3 L23 3" stroke="#ffffff" stroke-width="1.2"/><path d="M10 12 L18 10 L21 13 L20 19 L14 21 L10 18 Z" fill="#4a4a52"/><path d="M11 14 L18 12 L19 16 L13 18 Z" fill="#c8c8d0"/></g></svg>
<svg style="position:absolute;left:990px;top:284px" width="22" height="18" viewBox="0 0 22 18"><defs><linearGradient id="st" x1="0" x2="1"><stop offset="0" stop-color="#000" stop-opacity="0"/><stop offset="1" stop-color="#1a1a1e"/></linearGradient></defs><defs><filter id="b52" x="-20%" y="-20%" width="140%" height="140%"><feGaussianBlur stdDeviation="0.45"/></filter></defs><g filter="url(#b52)"><rect x="3" y="2" width="14" height="2.5" fill="url(#st)"/><rect x="7" y="8" width="15" height="3" fill="url(#st)"/><rect x="2" y="14" width="14" height="2.5" fill="url(#st)"/></g></svg>
<div class="t" style="left:1013.7px;top:262px;font-size:11px;line-height:13px;color:#000;letter-spacing:0.200px;">: 619</div>
<div class="t" style="left:1013.7px;top:286px;font-size:11px;line-height:13px;color:#000;letter-spacing:0.040px;">: 2327</div>
<div style="position:absolute;left:1061px;top:252px;width:152px;height:57px;border:1px solid #bdbcc5;border-radius:4px;box-sizing:border-box;box-shadow:inset 1px 1px 0 #f6f6f8, 1px 1px 0 #f0f0f4;"></div>
<div style="position:absolute;left:1068px;top:247px;width:48.9px;height:11px;background:#e0dfe3;"></div>
<div class="t" style="left:1070px;top:246px;font-size:11px;line-height:13px;color:#1f3f86;letter-spacing:-0.138px;">Targeting</div>
<svg style="position:absolute;left:1065px;top:258px" width="23" height="22" viewBox="0 0 23 22"><defs><radialGradient id="rg" cx="0.4" cy="0.35" r="0.7"><stop offset="0" stop-color="#f4f8fc"/><stop offset="1" stop-color="#b8c8d8"/></radialGradient></defs><defs><filter id="b53" x="-20%" y="-20%" width="140%" height="140%"><feGaussianBlur stdDeviation="0.4"/></filter></defs><g filter="url(#b53)"><circle cx="11" cy="11" r="10" fill="url(#rg)" stroke="#a8b4c0" stroke-width="1.2"/><path d="M7 15 L18 3" stroke="#203848" stroke-width="1.8"/><path d="M3 14 Q5 19 11 20" stroke="#ffffff" stroke-width="1" fill="none"/></g></svg>
<svg style="position:absolute;left:1065px;top:283px" width="22" height="19" viewBox="0 0 22 19"><defs><filter id="b54" x="-20%" y="-20%" width="140%" height="140%"><feGaussianBlur stdDeviation="0.45"/></filter></defs><g filter="url(#b54)"><path d="M6 14 Q4 6 12 2 Q19 0 20 4 Q18 12 10 15 Z" fill="#c0a868"/><path d="M9 12 Q8 6 13 4 Q17 3 18 5" stroke="#f0e4b8" stroke-width="1.2" fill="none"/><path d="M2 9 L9 12 M3 17 L9 13 M7 19 L10 14 M1 13 L8 13" stroke="#4a3a22" stroke-width="1.4"/></g></svg>
<div class="t" style="left:1092.6px;top:262px;font-size:11px;line-height:13px;color:#000;letter-spacing:-0.083px;">: 81 km</div>
<div class="t" style="left:1092.6px;top:286px;font-size:11px;line-height:13px;color:#000;letter-spacing:-0.133px;">: 268.1 mm</div>
<svg style="position:absolute;left:1153px;top:256px" width="24" height="23" viewBox="0 0 24 23"><defs><radialGradient id="mg" cx="0.4" cy="0.35" r="0.7"><stop offset="0" stop-color="#e8e0d4"/><stop offset="1" stop-color="#8a7e6a"/></radialGradient></defs><defs><filter id="b55" x="-20%" y="-20%" width="140%" height="140%"><feGaussianBlur stdDeviation="0.4"/></filter></defs><g filter="url(#b55)"><circle cx="12" cy="12" r="9.5" fill="url(#mg)" stroke="#6a6050" stroke-width="1"/><circle cx="12" cy="12" r="6" fill="none" stroke="#9a8e7a" stroke-width="1"/><path d="M12 0.5 L12 23.5 M0.5 12 L23.5 12" stroke="#7a7060" stroke-width="0.9"/><circle cx="12" cy="12" r="2" fill="#6a6050"/></g></svg>
<svg style="position:absolute;left:1156px;top:282px" width="21" height="21" viewBox="0 0 21 21"><defs><filter id="b56" x="-20%" y="-20%" width="140%" height="140%"><feGaussianBlur stdDeviation="0.35"/></filter></defs><g filter="url(#b56)"><circle cx="10.5" cy="10.5" r="9" fill="none" stroke="#707078" stroke-width="1.4"/><circle cx="10.5" cy="10.5" r="5.5" fill="none" stroke="#5a5a62" stroke-width="1.6"/><circle cx="10.5" cy="10.5" r="2.2" fill="none" stroke="#5a5a62" stroke-width="1.3"/></g></svg>
<div class="t" style="left:1180px;top:262px;font-size:11px;line-height:13px;color:#000;letter-spacing:0.500px;">: 7</div>
<div class="t" style="left:1180px;top:286px;font-size:11px;line-height:13px;color:#000;letter-spacing:0.467px;">: 19</div>
<div style="position:absolute;left:982px;top:317px;width:231px;height:35px;border:1px solid #bdbcc5;border-radius:4px;box-sizing:border-box;box-shadow:inset 1px 1px 0 #f6f6f8, 1px 1px 0 #f0f0f4;"></div>
<div style="position:absolute;left:988.5px;top:313px;width:40px;height:11px;background:#e0dfe3;"></div>
<div class="t" style="left:989.5px;top:312px;font-size:11px;line-height:13px;color:#1f3f86;letter-spacing:-0.143px;">Mobility</div>
<svg style="position:absolute;left:988px;top:326px" width="21" height="18" viewBox="0 0 21 18"><defs><radialGradient id="vg" cx="0.5" cy="0.5" r="0.5"><stop offset="0" stop-color="#60f0f8"/><stop offset="0.6" stop-color="#30c8d8"/><stop offset="1" stop-color="#80e0e8" stop-opacity="0"/></radialGradient></defs><defs><filter id="b57" x="-20%" y="-20%" width="140%" height="140%"><feGaussianBlur stdDeviation="0.5"/></filter></defs><g filter="url(#b57)"><ellipse cx="13" cy="11" rx="8" ry="6.5" fill="url(#vg)"/><path d="M2 8 L8 3 L13 4 L16 9 L11 15 L5 15 Z" fill="#e8dcc0"/><path d="M3 7 L8 4 L11 5 L6 9 Z" fill="#fff8e8"/><path d="M2 9 L6 15 L11 16" stroke="#2a2418" stroke-width="1.8" fill="none"/><path d="M10 10 L16 8 L19 12 L13 16 Z" fill="#38d0e0"/></g></svg>
<div class="t" style="left:1011.1px;top:328px;font-size:11px;line-height:13px;color:#000;letter-spacing:0.175px;">: 748 m/s</div>
<svg style="position:absolute;left:1067px;top:321px" width="27" height="25" viewBox="0 0 27 25"><defs><filter id="b58" x="-20%" y="-20%" width="140%" height="140%"><feGaussianBlur stdDeviation="0.45"/></filter></defs><g filter="url(#b58)"><circle cx="14" cy="11" r="5.5" fill="#3a80b8"/><circle cx="14" cy="11" r="3.6" fill="#90c8f0"/><path d="M14 11 L15 8" stroke="#1a3a68" stroke-width="1.2"/><path d="M14 2 L14 5" stroke="#40607a" stroke-width="1.8"/><path d="M3 23 L8 17 M7 23 L12 17 M11 23 L16 17 M15 23 L20 17" stroke="#5088b8" stroke-width="2"/><path d="M17 17 Q22 17 26 21 L20 22 Z" fill="#60a8d8"/><path d="M8 16 Q14 19 20 16" stroke="#3a6a98" stroke-width="1.5" fill="none"/></g></svg>
<div class="t" style="left:1094.6px;top:328px;font-size:11px;line-height:13px;color:#000;letter-spacing:-0.033px;">: 7.2 s</div>
<svg style="position:absolute;left:1134px;top:322px" width="21" height="23" viewBox="0 0 21 23"><defs><filter id="b59" x="-20%" y="-20%" width="140%" height="140%"><feGaussianBlur stdDeviation="0.45"/></filter></defs><g filter="url(#b59)"><path d="M2 9 Q3 3 9 2 L15 6 Q20 10 19 17 Q17 21 12 21 L4 14 Z" fill="#8a6a60"/><path d="M2 9 Q3 3 9 2 L12 5 Q6 7 5 13 Z" fill="#60e0c8"/><path d="M5 13 Q6 7 12 5 Q18 9 17 16 Q13 19 9 17 Z" fill="#c07868"/><path d="M8 9 L14 15 M10 7 L16 13" stroke="#f0d8c8" stroke-width="1" opacity="0.8"/><path d="M3 6 Q5 3 8 3" stroke="#c0fff0" stroke-width="1" fill="none"/><path d="M12 21 Q18 20 19 15" stroke="#3a2a24" stroke-width="1.5" fill="none"/></g></svg>
<div class="t" style="left:1155.2px;top:328px;font-size:11px;line-height:13px;color:#000;letter-spacing:0.343px;">: 3 au/s</div>
<div class="t" style="left:980.7px;top:362px;font-size:11px;line-height:13px;color:#000;letter-spacing:-0.174px;">Signature: 215.91 m2</div>
<div class="t" style="left:1100.5px;top:362px;font-size:11px;line-height:13px;color:#000;letter-spacing:-0.188px;">Cargohold: 700 m3</div>
<div class="t" style="left:980.7px;top:378px;font-size:11px;line-height:13px;color:#000;letter-spacing:-0.058px;">Dronebay: 25 / 25 m3</div>
<div class="t" style="left:980.7px;top:394px;font-size:11px;line-height:13px;color:#000;letter-spacing:-0.109px;">Price: 4,012,497,249 isk</div>
<div class="t" style="left:980.7px;top:410px;font-size:11px;line-height:13px;color:#000;letter-spacing:-0.249px;">Fleet Commander - right click to set</div>
<div class="t" style="left:981.7px;top:426px;font-size:11px;line-height:13px;color:#000;letter-spacing:-0.224px;">Wing Commander - right click to set</div>
<div class="t" style="left:980.7px;top:442px;font-size:11px;line-height:13px;color:#000;letter-spacing:-0.041px;">SC - Vulture\VULTURE [SUPPORT]</div>
<svg style="position:absolute;left:1152px;top:435px" width="76" height="27" viewBox="0 0 76 27"><defs><filter id="wb"><feGaussianBlur stdDeviation="0.6"/></filter></defs><path filter="url(#wb)" d="M3.4 14.6 Q3.5 6 10 4.6 Q15 4 20.7 4 L55 4.4 Q58 5 60 7.6 Q66 8.6 68 8.9 Q73 10 73 13.5 Q72.5 17 70 17.5 Q60 21 51.8 22.8 L10.8 23.6 Q5 23 4 20 Q3.3 18 3.4 14.6 Z" fill="#ffffff"/></svg>
</body></html>
